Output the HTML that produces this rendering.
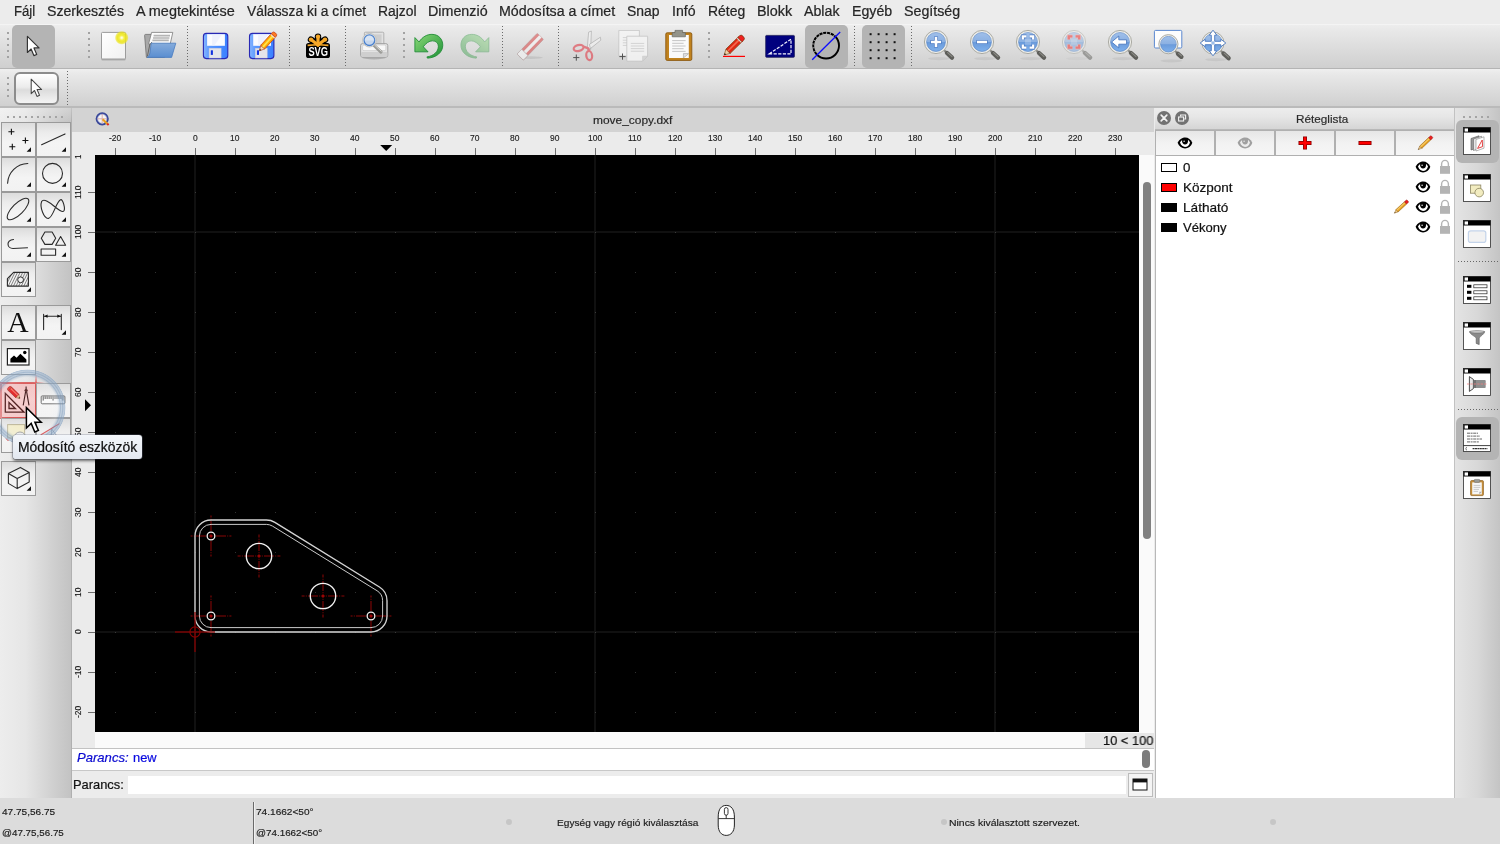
<!DOCTYPE html>
<html><head><meta charset="utf-8"><title>move_copy.dxf</title>
<style>
html,body{margin:0;padding:0;}
body{width:1500px;height:844px;overflow:hidden;background:#ececec;position:relative;font-family:"Liberation Sans",sans-serif;}
div,span,svg{box-sizing:content-box;}
</style></head><body><div id="root" style="position:absolute;left:0;top:0;width:1500px;height:844px;will-change:transform;">
<!-- top -->
<div style="position:absolute;left:0px;top:0px;width:1500px;height:24px;background:#ececec;"></div>
<span id="t1" style="position:absolute;left:13.70px;top:2.05px;font:14px/18px 'Liberation Sans', sans-serif;color:#262626;display:inline-block;transform-origin:0 0;transform:scaleX(0.9396);white-space:pre;-webkit-text-stroke:0.22px #262626;">Fájl</span>
<span id="t2" style="position:absolute;left:46.70px;top:2.05px;font:14px/18px 'Liberation Sans', sans-serif;color:#262626;display:inline-block;transform-origin:0 0;transform:scaleX(1.0098);white-space:pre;-webkit-text-stroke:0.22px #262626;">Szerkesztés</span>
<span id="t3" style="position:absolute;left:135.90px;top:2.05px;font:14px/18px 'Liberation Sans', sans-serif;color:#262626;display:inline-block;transform-origin:0 0;transform:scaleX(1.0310);white-space:pre;-webkit-text-stroke:0.22px #262626;">A megtekintése</span>
<span id="t4" style="position:absolute;left:246.90px;top:2.05px;font:14px/18px 'Liberation Sans', sans-serif;color:#262626;display:inline-block;transform-origin:0 0;transform:scaleX(0.9883);white-space:pre;-webkit-text-stroke:0.22px #262626;">Válassza ki a címet</span>
<span id="t5" style="position:absolute;left:377.50px;top:2.05px;font:14px/18px 'Liberation Sans', sans-serif;color:#262626;display:inline-block;transform-origin:0 0;transform:scaleX(0.9921);white-space:pre;-webkit-text-stroke:0.22px #262626;">Rajzol</span>
<span id="t6" style="position:absolute;left:427.50px;top:2.05px;font:14px/18px 'Liberation Sans', sans-serif;color:#262626;display:inline-block;transform-origin:0 0;transform:scaleX(1.0213);white-space:pre;-webkit-text-stroke:0.22px #262626;">Dimenzió</span>
<span id="t7" style="position:absolute;left:498.50px;top:2.05px;font:14px/18px 'Liberation Sans', sans-serif;color:#262626;display:inline-block;transform-origin:0 0;transform:scaleX(1.0158);white-space:pre;-webkit-text-stroke:0.22px #262626;">Módosítsa a címet</span>
<span id="t8" style="position:absolute;left:626.90px;top:2.05px;font:14px/18px 'Liberation Sans', sans-serif;color:#262626;display:inline-block;transform-origin:0 0;transform:scaleX(0.9938);white-space:pre;-webkit-text-stroke:0.22px #262626;">Snap</span>
<span id="t9" style="position:absolute;left:671.90px;top:2.05px;font:14px/18px 'Liberation Sans', sans-serif;color:#262626;display:inline-block;transform-origin:0 0;transform:scaleX(1.0060);white-space:pre;-webkit-text-stroke:0.22px #262626;">Infó</span>
<span id="t10" style="position:absolute;left:707.50px;top:2.05px;font:14px/18px 'Liberation Sans', sans-serif;color:#262626;display:inline-block;transform-origin:0 0;transform:scaleX(0.9957);white-space:pre;-webkit-text-stroke:0.22px #262626;">Réteg</span>
<span id="t11" style="position:absolute;left:756.90px;top:2.05px;font:14px/18px 'Liberation Sans', sans-serif;color:#262626;display:inline-block;transform-origin:0 0;transform:scaleX(1.0282);white-space:pre;-webkit-text-stroke:0.22px #262626;">Blokk</span>
<span id="t12" style="position:absolute;left:804.20px;top:2.05px;font:14px/18px 'Liberation Sans', sans-serif;color:#262626;display:inline-block;transform-origin:0 0;transform:scaleX(1.0134);white-space:pre;-webkit-text-stroke:0.22px #262626;">Ablak</span>
<span id="t13" style="position:absolute;left:851.90px;top:2.05px;font:14px/18px 'Liberation Sans', sans-serif;color:#262626;display:inline-block;transform-origin:0 0;transform:scaleX(1.0125);white-space:pre;-webkit-text-stroke:0.22px #262626;">Egyéb</span>
<span id="t14" style="position:absolute;left:903.50px;top:2.05px;font:14px/18px 'Liberation Sans', sans-serif;color:#262626;display:inline-block;transform-origin:0 0;transform:scaleX(1.0169);white-space:pre;-webkit-text-stroke:0.22px #262626;">Segítség</span>
<div style="position:absolute;left:0px;top:24px;width:1500px;height:44px;background:linear-gradient(#eeeeee,#e8e8e8 15%,#cfcfcf);"></div>
<div style="position:absolute;left:0px;top:24px;width:1500px;height:1px;background:#f4f4f4;"></div>
<div style="position:absolute;left:0px;top:68px;width:1500px;height:1px;background:#b4b4b4;"></div>
<div style="position:absolute;left:0px;top:69px;width:1500px;height:38px;background:linear-gradient(#efefef,#e8e8e8 15%,#cfcfcf);"></div>
<div style="position:absolute;left:0px;top:106px;width:1500px;height:2px;background:#bababa;"></div>
<div style="position:absolute;left:7px;top:32px;width:2px;height:2px;background:#a2a2a2;"></div><div style="position:absolute;left:7px;top:38px;width:2px;height:2px;background:#a2a2a2;"></div><div style="position:absolute;left:7px;top:44px;width:2px;height:2px;background:#a2a2a2;"></div><div style="position:absolute;left:7px;top:50px;width:2px;height:2px;background:#a2a2a2;"></div><div style="position:absolute;left:7px;top:56px;width:2px;height:2px;background:#a2a2a2;"></div>
<div style="position:absolute;left:88px;top:32px;width:2px;height:2px;background:#a2a2a2;"></div><div style="position:absolute;left:88px;top:38px;width:2px;height:2px;background:#a2a2a2;"></div><div style="position:absolute;left:88px;top:44px;width:2px;height:2px;background:#a2a2a2;"></div><div style="position:absolute;left:88px;top:50px;width:2px;height:2px;background:#a2a2a2;"></div><div style="position:absolute;left:88px;top:56px;width:2px;height:2px;background:#a2a2a2;"></div>
<div style="position:absolute;left:403px;top:32px;width:2px;height:2px;background:#a2a2a2;"></div><div style="position:absolute;left:403px;top:38px;width:2px;height:2px;background:#a2a2a2;"></div><div style="position:absolute;left:403px;top:44px;width:2px;height:2px;background:#a2a2a2;"></div><div style="position:absolute;left:403px;top:50px;width:2px;height:2px;background:#a2a2a2;"></div><div style="position:absolute;left:403px;top:56px;width:2px;height:2px;background:#a2a2a2;"></div>
<div style="position:absolute;left:708px;top:32px;width:2px;height:2px;background:#a2a2a2;"></div><div style="position:absolute;left:708px;top:38px;width:2px;height:2px;background:#a2a2a2;"></div><div style="position:absolute;left:708px;top:44px;width:2px;height:2px;background:#a2a2a2;"></div><div style="position:absolute;left:708px;top:50px;width:2px;height:2px;background:#a2a2a2;"></div><div style="position:absolute;left:708px;top:56px;width:2px;height:2px;background:#a2a2a2;"></div>
<div style="position:absolute;left:7px;top:77px;width:2px;height:2px;background:#a2a2a2;"></div><div style="position:absolute;left:7px;top:83px;width:2px;height:2px;background:#a2a2a2;"></div><div style="position:absolute;left:7px;top:89px;width:2px;height:2px;background:#a2a2a2;"></div><div style="position:absolute;left:7px;top:95px;width:2px;height:2px;background:#a2a2a2;"></div>
<div style="position:absolute;left:187px;top:26px;width:1px;height:41px;background:repeating-linear-gradient(to bottom,#6a6a6a 0 1px,transparent 1px 3px);"></div>
<div style="position:absolute;left:289px;top:26px;width:1px;height:41px;background:repeating-linear-gradient(to bottom,#6a6a6a 0 1px,transparent 1px 3px);"></div>
<div style="position:absolute;left:345px;top:26px;width:1px;height:41px;background:repeating-linear-gradient(to bottom,#6a6a6a 0 1px,transparent 1px 3px);"></div>
<div style="position:absolute;left:502px;top:26px;width:1px;height:41px;background:repeating-linear-gradient(to bottom,#6a6a6a 0 1px,transparent 1px 3px);"></div>
<div style="position:absolute;left:558px;top:26px;width:1px;height:41px;background:repeating-linear-gradient(to bottom,#6a6a6a 0 1px,transparent 1px 3px);"></div>
<div style="position:absolute;left:854px;top:26px;width:1px;height:41px;background:repeating-linear-gradient(to bottom,#6a6a6a 0 1px,transparent 1px 3px);"></div>
<div style="position:absolute;left:911px;top:26px;width:1px;height:41px;background:repeating-linear-gradient(to bottom,#6a6a6a 0 1px,transparent 1px 3px);"></div>
<div style="position:absolute;left:67px;top:71px;width:1px;height:35px;background:repeating-linear-gradient(to bottom,#6a6a6a 0 1px,transparent 1px 3px);"></div>
<div style="position:absolute;left:12px;top:25px;width:43px;height:43px;background:#b4b4b4;border-radius:5px;"></div>
<div style="position:absolute;left:805px;top:25px;width:43px;height:43px;background:#b4b4b4;border-radius:5px;"></div>
<div style="position:absolute;left:862px;top:25px;width:43px;height:43px;background:#b4b4b4;border-radius:5px;"></div>
<div style="position:absolute;left:14px;top:72px;width:45px;height:33px;box-sizing:border-box;border:2px solid #8c8c8c;border-radius:6px;background:linear-gradient(#ffffff,#ececec 45%,#dcdcdc 55%,#f4f4f4);"></div>
<!-- icons_top -->
<svg style="position:absolute;left:0px;top:0px;" width="1500" height="108" viewBox="0 0 1500 108"><defs><linearGradient id="lensg" x1="0" y1="0" x2="0" y2="1"><stop offset="0" stop-color="#86aee4"/><stop offset="0.5" stop-color="#6a9ada"/><stop offset="1" stop-color="#7eb0ec"/></linearGradient><linearGradient id="savg" x1="0" y1="0" x2="1" y2="0"><stop offset="0" stop-color="#86b6ff"/><stop offset="0.25" stop-color="#5a98ff"/><stop offset="1" stop-color="#3a80ff"/></linearGradient><linearGradient id="undog" x1="0" y1="0" x2="1" y2="1"><stop offset="0" stop-color="#8ad878"/><stop offset="1" stop-color="#1e9236"/></linearGradient><linearGradient id="papg" x1="0" y1="0" x2="1" y2="1"><stop offset="0" stop-color="#ffffff"/><stop offset="1" stop-color="#f0f0f0"/></linearGradient><linearGradient id="foldg" x1="0" y1="0" x2="0" y2="1"><stop offset="0" stop-color="#86acdc"/><stop offset="1" stop-color="#5a8ed0"/></linearGradient><radialGradient id="glow"><stop offset="0" stop-color="#ffffff"/><stop offset="0.12" stop-color="#fdfbc0"/><stop offset="0.35" stop-color="#f4ee30"/><stop offset="0.62" stop-color="#ece418"/><stop offset="0.82" stop-color="rgba(236,228,24,0.75)"/><stop offset="1" stop-color="rgba(236,228,24,0)"/></radialGradient></defs><path d="M0 0 V15.2 L3.5 11.9 L6.1 18.1 L8.8 17 L6.2 10.9 H11 Z" transform="translate(27.4 36.4) scale(1.06)" fill="#fff" stroke="#333" stroke-width="1.1" stroke-linejoin="round"/><path d="M0 0 V15.2 L3.5 11.9 L6.1 18.1 L8.8 17 L6.2 10.9 H11 Z" transform="translate(31.2 79.2) scale(0.95)" fill="#fff" stroke="#444" stroke-width="1.1" stroke-linejoin="round"/><rect x="101.4" y="32.8" width="24.2" height="27.6" rx="1.2" fill="#8e8e8e" opacity="0.55"/><rect x="101.5" y="32.4" width="24" height="26.6" rx="1" fill="url(#papg)" stroke="#9c9c9c" stroke-width="1"/><circle cx="121.7" cy="37.8" r="7" fill="url(#glow)" opacity="0.9"/><path d="M144.6 35.4 Q144.6 34.4 145.6 34.4 H151.5 L152.6 36 H165 V56.6 Q165 57.4 164 57.4 H146.4 Z" fill="#a8a8a8" stroke="#6e6e6e" stroke-width="0.8"/><path d="M151.6 32.4 H172.8 L170.2 44 H148.6 Z" fill="#fcfcfc" stroke="#7c7c7c" stroke-width="0.8"/><path d="M153.6 35.6 H170 M153 38 H169.4 M152.4 40.4 H168.8" stroke="#b4b4b4" stroke-width="1.6"/><path d="M147.4 56.2 L149.8 44.6 L152 42 " fill="none" stroke="#555" stroke-width="0.8"/><path d="M151.2 43.2 H175.8 L171.6 57.4 H147 Q149.6 56 150 53 Z" fill="url(#foldg)" stroke="#4a7cc0" stroke-width="0.8" stroke-linejoin="round"/><rect x="203.4" y="33.4" width="24.4" height="25.2" rx="3" fill="url(#savg)" stroke="#2828b4" stroke-width="1.1"/><rect x="207.1" y="34.2" width="17.8" height="11.6" fill="#fafbff"/><path d="M212.1 34.2 h10 l-8 11.6 h-2 Z" fill="#e8ecfc" opacity="0.7"/><rect x="209.1" y="48.2" width="12" height="9.8" fill="#e4e4ea" stroke="#c8c8d4" stroke-width="0.5"/><rect x="210.8" y="50.3" width="2.1" height="4.6" fill="#1030e0"/><rect x="249.5" y="33.4" width="24.4" height="25.2" rx="3" fill="url(#savg)" stroke="#2828b4" stroke-width="1.1"/><rect x="253.2" y="34.2" width="17.8" height="11.6" fill="#fafbff"/><path d="M258.2 34.2 h10 l-8 11.6 h-2 Z" fill="#e8ecfc" opacity="0.7"/><rect x="255.2" y="48.2" width="12" height="9.8" fill="#e4e4ea" stroke="#c8c8d4" stroke-width="0.5"/><rect x="256.9" y="50.3" width="2.1" height="4.6" fill="#1030e0"/><g transform="translate(259.4 50.8) rotate(-47.8)"><path d="M0 0 L5 -2.7 V2.7 Z" fill="#f6dcb4" stroke="#b03818" stroke-width="0.6"/><path d="M0 0 L1.8 -1 V1 Z" fill="#3a2a18"/><rect x="5" y="-2.7" width="15.4" height="5.4" fill="#ffa800" stroke="#c04018" stroke-width="0.7"/><rect x="5" y="-0.9" width="15.4" height="1.8" fill="#ffe24a"/><rect x="19.2" y="-2.7" width="1.4" height="5.4" fill="#f4e8d8"/><path d="M20.6 -2.7 H22.4 Q24 -2.7 24 0 Q24 2.7 22.4 2.7 H20.6 Z" fill="#ff7a20" stroke="#c04018" stroke-width="0.7"/></g><rect x="306" y="43" width="24" height="15" rx="2.6" fill="#000"/><path d="M308 45.4 H328" stroke="#000" stroke-width="4"/><path d="M318 45 L311 39.6" stroke="#000" stroke-width="6.4" stroke-linecap="round"/><path d="M318 45 L318 36.6" stroke="#000" stroke-width="6.4" stroke-linecap="round"/><path d="M318 45 L325 39.6" stroke="#000" stroke-width="6.4" stroke-linecap="round"/><path d="M318 45 L311 39.6" stroke="#f6a828" stroke-width="3.2" stroke-linecap="round"/><path d="M318 45 L318 36.6" stroke="#f6a828" stroke-width="3.2" stroke-linecap="round"/><path d="M318 45 L325 39.6" stroke="#f6a828" stroke-width="3.2" stroke-linecap="round"/><circle cx="311" cy="39.6" r="2.2" fill="#f6a828"/><circle cx="318" cy="36.6" r="2.2" fill="#f6a828"/><circle cx="325" cy="39.6" r="2.2" fill="#f6a828"/><path d="M307.6 45.4 Q318 44 328.4 45.4" stroke="#f6a828" stroke-width="1.6" fill="none"/><text x="318.2" y="56.4" font-family="Liberation Sans" font-weight="bold" font-size="12.4" text-anchor="middle" fill="#fff" textLength="19.6" lengthAdjust="spacingAndGlyphs">SVG</text><ellipse cx="374" cy="57.6" rx="12" ry="1.8" fill="rgba(0,0,0,0.18)"/><rect x="364.4" y="32.2" width="19.4" height="14" rx="1" fill="#e2e2e2" stroke="#a4a4a4" stroke-width="0.8"/><rect x="372" y="34.4" width="9.6" height="9" fill="#cecece"/><path d="M362.6 43.6 H385.8 Q387.8 43.6 387.8 45.6 V55.2 Q387.8 57.2 385.8 57.2 H362.6 Q360.6 57.2 360.6 55.2 V45.6 Q360.6 43.6 362.6 43.6 Z" fill="#e4e4e4" stroke="#9c9c9c" stroke-width="0.9"/><rect x="362.6" y="45" width="23.2" height="5.6" rx="1.4" fill="#f8f8f8" stroke="#c4c4c4" stroke-width="0.6"/><rect x="361" y="52" width="26.4" height="4.8" rx="1.4" fill="#cfcfcf"/><path d="M374 45.4 L381 52" stroke="#9c9c98" stroke-width="3.2" stroke-linecap="round"/><path d="M374.6 45 L381.2 51.2" stroke="#d8d8d4" stroke-width="1" stroke-linecap="round"/><circle cx="369.4" cy="40.2" r="6.8" fill="#f0f0ee" stroke="#b8b8b4" stroke-width="0.8"/><circle cx="369.4" cy="40.2" r="5.3" fill="#c4d6ee" stroke="#4a80cc" stroke-width="1.3"/><path d="M364.4 40.4 A5 5 0 0 1 374.4 40.4 Z" fill="rgba(255,255,255,0.35)"/><path d="M9.2 11 L13.6 15.6 C17 10.2 22 7.6 27 7.6 C34 7.6 38.4 12.6 38.4 19 C38.4 26.2 32 32 22.4 32.5 L21.8 31.2 C29 30.2 33.8 25.6 33.8 20 C33.8 16.6 31.2 14.4 27.6 14.4 C24 14.4 20.6 17 18 20.6 L23 25.9 H9.2 Z" transform="translate(406.1 27.1) scale(0.955)" fill="url(#undog)" stroke="#1e8a34" stroke-width="0.9" stroke-linejoin="round"/><g opacity="0.42"><path d="M9.2 11 L13.6 15.6 C17 10.2 22 7.6 27 7.6 C34 7.6 38.4 12.6 38.4 19 C38.4 26.2 32 32 22.4 32.5 L21.8 31.2 C29 30.2 33.8 25.6 33.8 20 C33.8 16.6 31.2 14.4 27.6 14.4 C24 14.4 20.6 17 18 20.6 L23 25.9 H9.2 Z" transform="translate(497.6 27.1) scale(-0.955 0.955)" fill="url(#undog)" stroke="#1e8a34" stroke-width="0.9" stroke-linejoin="round"/></g><g opacity="0.52"><ellipse cx="531" cy="57.6" rx="12" ry="1.3" fill="rgba(0,0,0,0.16)"/><g transform="translate(523.4 53.8) rotate(-45.8)"><rect x="-4.6" y="-4.4" width="29" height="8.8" rx="1" fill="#d83c3c" stroke="#a05050" stroke-width="0.6"/><rect x="2" y="-1.6" width="22.4" height="3.2" fill="#fafafa"/><rect x="-4.6" y="-4.4" width="6.6" height="8.8" rx="0.8" fill="#fcfcfc" stroke="#909090" stroke-width="0.6"/></g></g><g opacity="0.6"><path d="M587.2 49.4 L588.6 32.2 L591.4 31 L590.6 49.6 Z" fill="#f4f4f4" stroke="#8a8a8a" stroke-width="0.7"/><path d="M589.4 44.4 L600.4 37.2 L600.8 40.2 L590.4 48.6 Z" fill="#f4f4f4" stroke="#8a8a8a" stroke-width="0.7"/><ellipse cx="578.6" cy="48" rx="5" ry="2.9" transform="rotate(-14 578.6 48)" fill="none" stroke="#e03c48" stroke-width="2.2"/><ellipse cx="589.2" cy="55.6" rx="2.9" ry="4.6" transform="rotate(-8 589.2 55.6)" fill="none" stroke="#e03c48" stroke-width="2.2"/><path d="M583.4 46.6 L588.6 48.4 M588.4 48.2 L588.8 51.2" stroke="#e03c48" stroke-width="2.4"/></g><path d="M573.2 57.6 H579.4 M576.3 54.5 V60.7" stroke="#3a3a3a" stroke-width="1" opacity="0.85"/><g opacity="0.8"><path d="M618.8 30.4 H639.4 V51 L634.4 56 H618.8 Z" fill="#f6f6f6" stroke="#bdbdbd" stroke-width="0.8" stroke-linejoin="round"/><path d="M634.4 56 V51 H639.4 Z" fill="#d4d4d4" stroke="#bdbdbd" stroke-width="0.5"/><path d="M622.8 37.6 H636" stroke="#d0d0d0" stroke-width="1"/><path d="M622.8 40.2 H636" stroke="#d0d0d0" stroke-width="1"/><path d="M622.8 42.8 H636" stroke="#d0d0d0" stroke-width="1"/><path d="M622.8 45.4 H636" stroke="#d0d0d0" stroke-width="1"/><path d="M626.8 36.2 H647.6 V56.2 L642.6 61.2 H626.8 Z" fill="#f6f6f6" stroke="#bdbdbd" stroke-width="0.8" stroke-linejoin="round"/><path d="M642.6 61.2 V56.2 H647.6 Z" fill="#d4d4d4" stroke="#bdbdbd" stroke-width="0.5"/><path d="M630.8 43.4 H644.2" stroke="#d0d0d0" stroke-width="1"/><path d="M630.8 46 H644.2" stroke="#d0d0d0" stroke-width="1"/><path d="M630.8 48.6 H644.2" stroke="#d0d0d0" stroke-width="1"/><path d="M630.8 51.2 H644.2" stroke="#d0d0d0" stroke-width="1"/></g><path d="M619.4 56.6 H625.6 M622.5 53.5 V59.7" stroke="#3a3a3a" stroke-width="1" opacity="0.85"/><rect x="665.8" y="32.8" width="26" height="27.6" rx="1.4" fill="#c0821e" stroke="#8a5810" stroke-width="0.9"/><path d="M669 35 H688.8 V58 H669 Z" fill="#fafafa"/><path d="M672.2 40.6 H685.6" stroke="#c0c0c0" stroke-width="0.9"/><path d="M672.2 43.3 H683.6" stroke="#c0c0c0" stroke-width="0.9"/><path d="M672.2 46 H685.6" stroke="#c0c0c0" stroke-width="0.9"/><path d="M672.2 48.7 H683.6" stroke="#c0c0c0" stroke-width="0.9"/><path d="M672.2 51.4 H685.6" stroke="#c0c0c0" stroke-width="0.9"/><path d="M683.4 58 V53.6 H688.8 Z" fill="#b8b8b8"/><path d="M683.4 53.6 H688.8 L683.4 58 Z" fill="#e0e0e0" stroke="#9a9a9a" stroke-width="0.4"/><path d="M675 30.4 H682.6 V32.6 H685.4 V36.8 H672.2 V32.6 H675 Z" fill="#94948a" stroke="#66665e" stroke-width="0.7" stroke-linejoin="round"/><path d="M723 56.4 H745" stroke="#ff0000" stroke-width="1.2"/><g transform="translate(724.2 55) rotate(-44.4)"><path d="M0 0 L5.4 -3 V3 Z" fill="#f0d2a8" stroke="#7a4a18" stroke-width="0.6"/><path d="M0 0 L1.8 -1 V1 Z" fill="#201008"/><rect x="5.4" y="-3" width="17.6" height="6" fill="#e02814" stroke="#7a3a10" stroke-width="0.7"/><rect x="5.4" y="-1.1" width="17.6" height="1.6" fill="#f46a50"/><rect x="20.4" y="-3" width="1.6" height="6" fill="#d8d0c8"/><path d="M22 -3 H24.6 Q26.6 -3 26.6 0 Q26.6 3 24.6 3 H22 Z" fill="#f02020" stroke="#7a3a10" stroke-width="0.7"/></g><rect x="765.7" y="35.4" width="28.7" height="21.9" rx="0.8" fill="#00007e" stroke="#20205a" stroke-width="0.8"/><path d="M769.2 53.9 L791 39.2 V53.9 Z" fill="none" stroke="#f4f4ff" stroke-width="1.2" stroke-dasharray="3.2 1.4"/><circle cx="826.1" cy="45.6" r="12.9" fill="none" stroke="#000" stroke-width="1.9"/><path d="M816.2 54.4 A13 13 0 0 1 835.6 36.4" fill="none" stroke="#b4b4b4" stroke-width="3.4" stroke-dasharray="0.9 3.1" stroke-dashoffset="1.2"/><path d="M812.2 59.8 L840.2 32" stroke="#0c0cff" stroke-width="1.3"/><rect x="869.6" y="33.2" width="2" height="2" fill="#111"/><rect x="869.6" y="41.2" width="2" height="2" fill="#111"/><rect x="869.6" y="49.2" width="2" height="2" fill="#111"/><rect x="869.6" y="57.2" width="2" height="2" fill="#111"/><rect x="877.6" y="33.2" width="2" height="2" fill="#111"/><rect x="877.6" y="41.2" width="2" height="2" fill="#111"/><rect x="877.6" y="49.2" width="2" height="2" fill="#111"/><rect x="877.6" y="57.2" width="2" height="2" fill="#111"/><rect x="885.6" y="33.2" width="2" height="2" fill="#111"/><rect x="885.6" y="41.2" width="2" height="2" fill="#111"/><rect x="885.6" y="49.2" width="2" height="2" fill="#111"/><rect x="885.6" y="57.2" width="2" height="2" fill="#111"/><rect x="893.6" y="33.2" width="2" height="2" fill="#111"/><rect x="893.6" y="41.2" width="2" height="2" fill="#111"/><rect x="893.6" y="49.2" width="2" height="2" fill="#111"/><rect x="893.6" y="57.2" width="2" height="2" fill="#111"/><g opacity="1"><ellipse cx="939" cy="58.6" rx="11" ry="1.6" fill="rgba(0,0,0,0.06)"/><path d="M943.201 49.2012 L947.201 53.2012" stroke="#8c8c86" stroke-width="2.2"/><path d="M947.001 53.0012 L952.001 57.6012" stroke="#5e5e5a" stroke-width="4.4" stroke-linecap="round"/><path d="M947.601 52.6012 L952.001 56.6012" stroke="#8a8a84" stroke-width="1.2" stroke-linecap="round"/><circle cx="936" cy="42" r="11.6" fill="#ecece8" stroke="#a4a49c" stroke-width="0.9"/><circle cx="936" cy="42" r="9.4" fill="url(#lensg)" stroke="#5a88c8" stroke-width="0.7"/><path d="M926.6 42 A9.4 9.4 0 0 1 945.4 42 Z" fill="rgba(255,255,255,0.22)"/><path d="M930.4 42 H941.6 M936 36.4 V47.6" stroke="#4a78c0" stroke-width="4"/><path d="M931 42 H941 M936 37 V47" stroke="#fff" stroke-width="2.6"/></g><g opacity="1"><ellipse cx="985" cy="58.6" rx="11" ry="1.6" fill="rgba(0,0,0,0.06)"/><path d="M989.201 49.2012 L993.201 53.2012" stroke="#8c8c86" stroke-width="2.2"/><path d="M993.001 53.0012 L998.001 57.6012" stroke="#5e5e5a" stroke-width="4.4" stroke-linecap="round"/><path d="M993.601 52.6012 L998.001 56.6012" stroke="#8a8a84" stroke-width="1.2" stroke-linecap="round"/><circle cx="982" cy="42" r="11.6" fill="#ecece8" stroke="#a4a49c" stroke-width="0.9"/><circle cx="982" cy="42" r="9.4" fill="url(#lensg)" stroke="#5a88c8" stroke-width="0.7"/><path d="M972.6 42 A9.4 9.4 0 0 1 991.4 42 Z" fill="rgba(255,255,255,0.22)"/><path d="M976.4 42 H987.6" stroke="#4a78c0" stroke-width="4"/><path d="M977 42 H987" stroke="#fff" stroke-width="2.6"/></g><g opacity="1"><ellipse cx="1031" cy="58.6" rx="11" ry="1.6" fill="rgba(0,0,0,0.06)"/><path d="M1035.2 49.2012 L1039.2 53.2012" stroke="#8c8c86" stroke-width="2.2"/><path d="M1039 53.0012 L1044 57.6012" stroke="#5e5e5a" stroke-width="4.4" stroke-linecap="round"/><path d="M1039.6 52.6012 L1044 56.6012" stroke="#8a8a84" stroke-width="1.2" stroke-linecap="round"/><circle cx="1028" cy="42" r="11.6" fill="#ecece8" stroke="#a4a49c" stroke-width="0.9"/><circle cx="1028" cy="42" r="9.4" fill="url(#lensg)" stroke="#5a88c8" stroke-width="0.7"/><path d="M1018.6 42 A9.4 9.4 0 0 1 1037.4 42 Z" fill="rgba(255,255,255,0.22)"/><path d="M1022.8 39.6 v-3.2 h3.6 M1029.6 36.4 h3.6 v3.2 M1033.2 44.4 v3.2 h-3.6 M1026.4 47.6 h-3.6 v-3.2" fill="none" stroke="#4a78c0" stroke-width="3.7"/><path d="M1022.8 39.6 v-3.2 h3.6 M1029.6 36.4 h3.6 v3.2 M1033.2 44.4 v3.2 h-3.6 M1026.4 47.6 h-3.6 v-3.2" fill="none" stroke="#fff" stroke-width="2.3"/><rect x="1025" y="39.3" width="6" height="5.4" fill="rgba(255,255,255,0.22)"/></g><g opacity="0.5"><ellipse cx="1077" cy="58.6" rx="11" ry="1.6" fill="rgba(0,0,0,0.06)"/><path d="M1081.2 49.2012 L1085.2 53.2012" stroke="#8c8c86" stroke-width="2.2"/><path d="M1085 53.0012 L1090 57.6012" stroke="#5e5e5a" stroke-width="4.4" stroke-linecap="round"/><path d="M1085.6 52.6012 L1090 56.6012" stroke="#8a8a84" stroke-width="1.2" stroke-linecap="round"/><circle cx="1074" cy="42" r="11.6" fill="#ecece8" stroke="#a4a49c" stroke-width="0.9"/><circle cx="1074" cy="42" r="9.4" fill="url(#lensg)" stroke="#5a88c8" stroke-width="0.7"/><path d="M1064.6 42 A9.4 9.4 0 0 1 1083.4 42 Z" fill="rgba(255,255,255,0.22)"/><path d="M1068.8 39.6 v-3.2 h3.6 M1075.6 36.4 h3.6 v3.2 M1079.2 44.4 v3.2 h-3.6 M1072.4 47.6 h-3.6 v-3.2" fill="none" stroke="#e8a0a0" stroke-width="3.7"/><path d="M1068.8 39.6 v-3.2 h3.6 M1075.6 36.4 h3.6 v3.2 M1079.2 44.4 v3.2 h-3.6 M1072.4 47.6 h-3.6 v-3.2" fill="none" stroke="#f02020" stroke-width="2.3"/><rect x="1071" y="39.3" width="6" height="5.4" fill="rgba(255,255,255,0.22)"/></g><g opacity="1"><ellipse cx="1123" cy="58.6" rx="11" ry="1.6" fill="rgba(0,0,0,0.06)"/><path d="M1127.2 49.2012 L1131.2 53.2012" stroke="#8c8c86" stroke-width="2.2"/><path d="M1131 53.0012 L1136 57.6012" stroke="#5e5e5a" stroke-width="4.4" stroke-linecap="round"/><path d="M1131.6 52.6012 L1136 56.6012" stroke="#8a8a84" stroke-width="1.2" stroke-linecap="round"/><circle cx="1120" cy="42" r="11.6" fill="#ecece8" stroke="#a4a49c" stroke-width="0.9"/><circle cx="1120" cy="42" r="9.4" fill="url(#lensg)" stroke="#5a88c8" stroke-width="0.7"/><path d="M1110.6 42 A9.4 9.4 0 0 1 1129.4 42 Z" fill="rgba(255,255,255,0.22)"/><path d="M1111.6 42 L1118.8 36 V39.8 H1126.6 V44.2 H1118.8 V48 Z" fill="#fff" stroke="#4a78c0" stroke-width="0.9" stroke-linejoin="round"/></g><rect x="1154.4" y="30.4" width="27.4" height="17.6" rx="1.2" fill="#fdfdfd" stroke="#5a88d0" stroke-width="1"/><g opacity="1"><ellipse cx="1171.4" cy="60.8" rx="11" ry="1.6" fill="rgba(0,0,0,0.06)"/><path d="M1174.19 49.9872 L1178.19 53.9872" stroke="#8c8c86" stroke-width="2.2"/><path d="M1177.99 53.7872 L1181.39 56.7872" stroke="#5e5e5a" stroke-width="4.4" stroke-linecap="round"/><path d="M1178.59 53.3872 L1181.39 55.7872" stroke="#8a8a84" stroke-width="1.2" stroke-linecap="round"/><circle cx="1168.4" cy="44.2" r="9.6" fill="#ecece8" stroke="#a4a49c" stroke-width="0.9"/><circle cx="1168.4" cy="44.2" r="7.8" fill="url(#lensg)" stroke="#5a88c8" stroke-width="0.7"/><path d="M1160.6 44.2 A7.8 7.8 0 0 1 1176.2 44.2 Z" fill="rgba(255,255,255,0.22)"/></g><g opacity="1"><ellipse cx="1216" cy="59.6" rx="11" ry="1.6" fill="rgba(0,0,0,0.06)"/><path d="M1219.78 49.777 L1223.78 53.777" stroke="#8c8c86" stroke-width="2.2"/><path d="M1223.58 53.577 L1228.58 58.177" stroke="#5e5e5a" stroke-width="4.4" stroke-linecap="round"/><path d="M1224.18 53.177 L1228.58 57.177" stroke="#8a8a84" stroke-width="1.2" stroke-linecap="round"/><circle cx="1213" cy="43" r="11" fill="#ecece8" stroke="#a4a49c" stroke-width="0.9"/><circle cx="1213" cy="43" r="9.2" fill="url(#lensg)" stroke="#5a88c8" stroke-width="0.7"/><path d="M1203.8 43 A9.2 9.2 0 0 1 1222.2 43 Z" fill="rgba(255,255,255,0.22)"/><path d="M1213 30.2 L1216.8 35.2 H1214.7 V41.3 H1220.8 V39.2 L1225.8 43 L1220.8 46.8 V44.7 H1214.7 V50.8 H1216.8 L1213 55.8 L1209.2 50.8 H1211.3 V44.7 H1205.2 V46.8 L1200.2 43 L1205.2 39.2 V41.3 H1211.3 V35.2 H1209.2 Z" fill="#fff" stroke="#4a78c0" stroke-width="0.9" stroke-linejoin="round"/><rect x="1211.4" y="41.4" width="3.2" height="3.2" fill="#9abce8"/></g></svg>
<!-- left -->
<div style="position:absolute;left:0px;top:108px;width:72px;height:690px;background:linear-gradient(to right,#ededed 0,#e6e6e6 35%,#cfcfcf 75%,#c2c2c2 100%);"></div>
<div style="position:absolute;left:71px;top:108px;width:1px;height:690px;background:#b0b0b0;"></div>
<div style="position:absolute;left:0px;top:108px;width:72px;height:14px;background:linear-gradient(rgba(255,255,255,0.25),rgba(255,255,255,0));"></div>
<div style="position:absolute;left:7px;top:116px;width:2px;height:2px;background:#a4a4a4;"></div><div style="position:absolute;left:13px;top:116px;width:2px;height:2px;background:#a4a4a4;"></div><div style="position:absolute;left:19px;top:116px;width:2px;height:2px;background:#a4a4a4;"></div><div style="position:absolute;left:25px;top:116px;width:2px;height:2px;background:#a4a4a4;"></div><div style="position:absolute;left:31px;top:116px;width:2px;height:2px;background:#a4a4a4;"></div><div style="position:absolute;left:37px;top:116px;width:2px;height:2px;background:#a4a4a4;"></div><div style="position:absolute;left:43px;top:116px;width:2px;height:2px;background:#a4a4a4;"></div><div style="position:absolute;left:49px;top:116px;width:2px;height:2px;background:#a4a4a4;"></div><div style="position:absolute;left:55px;top:116px;width:2px;height:2px;background:#a4a4a4;"></div><div style="position:absolute;left:61px;top:116px;width:2px;height:2px;background:#a4a4a4;"></div>
<div style="position:absolute;left:1px;top:122px;width:33px;height:33px;border:1px solid #9a9a9a;background:linear-gradient(#dcdcdc,#ececec 30%,#f4f4f4 60%,#f2f2f2);"></div><svg style="position:absolute;left:1px;top:122px;" width="35" height="35" viewBox="0 0 35 35"><path d="M7.4 9.7 H13.4 M10.4 6.7 V12.7" stroke="#111" stroke-width="1.1" fill="none"/><path d="M21.4 18.5 H27.4 M24.4 15.5 V21.5" stroke="#111" stroke-width="1.1" fill="none"/><path d="M8.3 24.7 H14.3 M11.3 21.7 V27.7" stroke="#111" stroke-width="1.1" fill="none"/><path d="M30 25.3 V29.7 H25.6 Z" fill="#111"/></svg>
<div style="position:absolute;left:36px;top:122px;width:33px;height:33px;border:1px solid #9a9a9a;background:linear-gradient(#dcdcdc,#ececec 30%,#f4f4f4 60%,#f2f2f2);"></div><svg style="position:absolute;left:36px;top:122px;" width="35" height="35" viewBox="0 0 35 35"><path d="M5.6 22.8 L29 11.9" fill="none" stroke="#2a2a2a" stroke-width="1.1" stroke-linecap="round" stroke-linejoin="round"/><path d="M30 25.3 V29.7 H25.6 Z" fill="#111"/></svg>
<div style="position:absolute;left:1px;top:157px;width:33px;height:33px;border:1px solid #9a9a9a;background:linear-gradient(#dcdcdc,#ececec 30%,#f4f4f4 60%,#f2f2f2);"></div><svg style="position:absolute;left:1px;top:157px;" width="35" height="35" viewBox="0 0 35 35"><path d="M6.6 26.2 A20.5 20.5 0 0 1 26.8 6.5" fill="none" stroke="#2a2a2a" stroke-width="1.1" stroke-linecap="round" stroke-linejoin="round"/><path d="M30 25.3 V29.7 H25.6 Z" fill="#111"/></svg>
<div style="position:absolute;left:36px;top:157px;width:33px;height:33px;border:1px solid #9a9a9a;background:linear-gradient(#dcdcdc,#ececec 30%,#f4f4f4 60%,#f2f2f2);"></div><svg style="position:absolute;left:36px;top:157px;" width="35" height="35" viewBox="0 0 35 35"><circle cx="16.5" cy="16.4" r="10" fill="none" stroke="#2a2a2a" stroke-width="1.1" stroke-linecap="round" stroke-linejoin="round"/><path d="M30 25.3 V29.7 H25.6 Z" fill="#111"/></svg>
<div style="position:absolute;left:1px;top:192px;width:33px;height:33px;border:1px solid #9a9a9a;background:linear-gradient(#dcdcdc,#ececec 30%,#f4f4f4 60%,#f2f2f2);"></div><svg style="position:absolute;left:1px;top:192px;" width="35" height="35" viewBox="0 0 35 35"><ellipse cx="17" cy="17" rx="14.2" ry="5.5" transform="rotate(-45 17 17)" fill="none" stroke="#2a2a2a" stroke-width="1.1" stroke-linecap="round" stroke-linejoin="round"/><path d="M30 25.3 V29.7 H25.6 Z" fill="#111"/></svg>
<div style="position:absolute;left:36px;top:192px;width:33px;height:33px;border:1px solid #9a9a9a;background:linear-gradient(#dcdcdc,#ececec 30%,#f4f4f4 60%,#f2f2f2);"></div><svg style="position:absolute;left:36px;top:192px;" width="35" height="35" viewBox="0 0 35 35"><path d="M5.6 9.6 C3.5 15 8 27 12.5 26.4 C17 25.8 20 10 24.5 7.8 C27 6.5 29.5 17 27.8 19 C26.5 20.6 22 17.5 18.5 14.5 C14 10.5 7.5 6 5.6 9.6 Z" fill="none" stroke="#2a2a2a" stroke-width="1.1" stroke-linecap="round" stroke-linejoin="round"/><path d="M30 25.3 V29.7 H25.6 Z" fill="#111"/></svg>
<div style="position:absolute;left:1px;top:227px;width:33px;height:33px;border:1px solid #9a9a9a;background:linear-gradient(#dcdcdc,#ececec 30%,#f4f4f4 60%,#f2f2f2);"></div><svg style="position:absolute;left:1px;top:227px;" width="35" height="35" viewBox="0 0 35 35"><path d="M12.5 12.5 C8.5 12.5 7 15.5 7 17 C7 19.5 9 21.5 12 21.5 L26.5 20.8" fill="none" stroke="#2a2a2a" stroke-width="1.1" stroke-linecap="round" stroke-linejoin="round"/><path d="M30 25.3 V29.7 H25.6 Z" fill="#111"/></svg>
<div style="position:absolute;left:36px;top:227px;width:33px;height:33px;border:1px solid #9a9a9a;background:linear-gradient(#dcdcdc,#ececec 30%,#f4f4f4 60%,#f2f2f2);"></div><svg style="position:absolute;left:36px;top:227px;" width="35" height="35" viewBox="0 0 35 35"><path d="M8.9 5 H16.1 L19.7 11.2 L16.1 17.4 H8.9 L5.3 11.2 Z" fill="none" stroke="#2a2a2a" stroke-width="1.1" stroke-linecap="round" stroke-linejoin="round"/><path d="M19.6 18.3 H29.6 L24.6 9.6 Z" fill="none" stroke="#2a2a2a" stroke-width="1.1" stroke-linecap="round" stroke-linejoin="round"/><rect x="5.1" y="22" width="14.5" height="6.3" fill="none" stroke="#2a2a2a" stroke-width="1.1" stroke-linecap="round" stroke-linejoin="round"/><path d="M30 25.3 V29.7 H25.6 Z" fill="#111"/></svg>
<div style="position:absolute;left:1px;top:262px;width:33px;height:33px;border:1px solid #9a9a9a;background:linear-gradient(#dcdcdc,#ececec 30%,#f4f4f4 60%,#f2f2f2);"></div><svg style="position:absolute;left:1px;top:262px;" width="35" height="35" viewBox="0 0 35 35"><defs><clipPath id="hc"><path d="M6.4 24.1 V16.6 L12.6 10.4 H27.4 V24.1 Z M19.6 14.9 a2.9 2.9 0 1 0 0.01 0 Z" clip-rule="evenodd"/></clipPath></defs><g clip-path="url(#hc)"><path d="M2.1 24 L8.7 10.4" stroke="#555" stroke-width="0.7"/><path d="M4.7 24 L11.3 10.4" stroke="#555" stroke-width="0.7"/><path d="M7.3 24 L13.9 10.4" stroke="#555" stroke-width="0.7"/><path d="M9.9 24 L16.5 10.4" stroke="#555" stroke-width="0.7"/><path d="M12.5 24 L19.1 10.4" stroke="#555" stroke-width="0.7"/><path d="M15.1 24 L21.7 10.4" stroke="#555" stroke-width="0.7"/><path d="M17.7 24 L24.3 10.4" stroke="#555" stroke-width="0.7"/><path d="M20.3 24 L26.9 10.4" stroke="#555" stroke-width="0.7"/><path d="M22.9 24 L29.5 10.4" stroke="#555" stroke-width="0.7"/><path d="M25.5 24 L32.1 10.4" stroke="#555" stroke-width="0.7"/><path d="M28.1 24 L34.7 10.4" stroke="#555" stroke-width="0.7"/></g><path d="M6.4 24.1 V16.6 L12.6 10.4 H27.4 V24.1 Z" fill="none" stroke="#2a2a2a" stroke-width="1.1" stroke-linecap="round" stroke-linejoin="round"/><circle cx="19.6" cy="17.8" r="2.9" fill="#f2f2f2" stroke="#2a2a2a" stroke-width="1"/><path d="M30 25.3 V29.7 H25.6 Z" fill="#111"/></svg>
<div style="position:absolute;left:1px;top:305px;width:33px;height:33px;border:1px solid #9a9a9a;background:linear-gradient(#dcdcdc,#ececec 30%,#f4f4f4 60%,#f2f2f2);"></div><svg style="position:absolute;left:1px;top:305px;" width="35" height="35" viewBox="0 0 35 35"><text x="17" y="26.6" font-family="Liberation Serif" font-size="29.6" text-anchor="middle" fill="#111">A</text></svg>
<div style="position:absolute;left:36px;top:305px;width:33px;height:33px;border:1px solid #9a9a9a;background:linear-gradient(#dcdcdc,#ececec 30%,#f4f4f4 60%,#f2f2f2);"></div><svg style="position:absolute;left:36px;top:305px;" width="35" height="35" viewBox="0 0 35 35"><path d="M7.6 9.2 V24.6 M25.3 9.2 V24.6 M7.6 11.2 H25.3" fill="none" stroke="#2a2a2a" stroke-width="1.1" stroke-linecap="round" stroke-linejoin="round"/><path d="M8 11.2 L11.6 9.6 V12.8 Z M24.9 11.2 L21.3 9.6 V12.8 Z" fill="#111"/><path d="M30 25.3 V29.7 H25.6 Z" fill="#111"/></svg>
<div style="position:absolute;left:1px;top:340px;width:33px;height:33px;border:1px solid #9a9a9a;background:linear-gradient(#dcdcdc,#ececec 30%,#f4f4f4 60%,#f2f2f2);"></div><svg style="position:absolute;left:1px;top:340px;" width="35" height="35" viewBox="0 0 35 35"><rect x="6.4" y="8.6" width="21.6" height="16.4" fill="#fff" stroke="#222" stroke-width="1.2"/><path d="M9.4 22.4 V18.8 L13 15.4 L15.6 17.8 L19.4 13.8 L25.4 19.4 V22.4 Z" fill="#000"/><circle cx="23.8" cy="12.5" r="1.7" fill="#000"/></svg>
<div style="position:absolute;left:1px;top:383px;width:33px;height:33px;border:1px solid #d45858;background:linear-gradient(#f2c0c0,#f6cccc 50%,#f4c8c8);"></div><svg style="position:absolute;left:1px;top:383px;" width="35" height="35" viewBox="0 0 35 35"><path d="M4.3 10.4 V29.2 H23 Z M8 19.6 V25.5 H14.4 Z" fill="none" stroke="#4a1616" stroke-width="1.3" stroke-linejoin="miter"/><g transform="translate(18.9 15.4) rotate(-136.2)"><path d="M0 0 L3.6 -2.4 V2.4 Z" fill="#e8b890" stroke="#7a4a18" stroke-width="0.4"/><path d="M0 0 L1.3 -0.9 V0.9 Z" fill="#301808"/><rect x="3.6" y="-2.4" width="10.2" height="4.8" fill="#e01c1c" stroke="#8a1a10" stroke-width="0.5"/><rect x="3.6" y="0.2" width="10.2" height="1.2" fill="#f47060"/><path d="M13.8 -2.4 H14.6 Q16 -2.4 16 0 Q16 2.4 14.6 2.4 H13.8 Z" fill="#f02020" stroke="#8a1a10" stroke-width="0.5"/></g><path d="M25.1 3.6 V6.4 M24.6 8.6 L22.2 22.4 M25.6 8.6 L28 22.4" stroke="#3a1414" stroke-width="1.1" fill="none"/><circle cx="25.1" cy="7.5" r="1.3" fill="#5a2020" stroke="#3a1414" stroke-width="0.6"/></svg>
<div style="position:absolute;left:0px;top:382.4px;width:45px;height:1.6px;background:linear-gradient(to right,rgba(214,76,76,0.95) 75%,rgba(214,76,76,0));"></div>
<div style="position:absolute;left:0px;top:417px;width:44px;height:1.6px;background:linear-gradient(to right,rgba(214,76,76,0.95) 78%,rgba(214,76,76,0));"></div>
<div style="position:absolute;left:35px;top:374px;width:1.6px;height:47px;background:linear-gradient(rgba(214,76,76,0),rgba(214,76,76,0.95) 20%,rgba(214,76,76,0.95) 88%,rgba(214,76,76,0));"></div>
<div style="position:absolute;left:0px;top:383px;width:2px;height:35px;background:#e07878;"></div>
<div style="position:absolute;left:36px;top:383px;width:33px;height:33px;border:1px solid #9a9a9a;background:linear-gradient(#dcdcdc,#ececec 30%,#f4f4f4 60%,#f2f2f2);"></div><svg style="position:absolute;left:36px;top:383px;" width="35" height="35" viewBox="0 0 35 35"><rect x="5.2" y="12.9" width="23.7" height="7.9" rx="1" fill="#fafafa" stroke="#6a6a6a" stroke-width="1"/><path d="M7.2 13.4 V17.6" stroke="#444" stroke-width="0.9"/><path d="M9.17 13.4 V16" stroke="#444" stroke-width="0.9"/><path d="M11.14 13.4 V16" stroke="#444" stroke-width="0.9"/><path d="M13.11 13.4 V16" stroke="#444" stroke-width="0.9"/><path d="M15.08 13.4 V16" stroke="#444" stroke-width="0.9"/><path d="M17.05 13.4 V17.6" stroke="#444" stroke-width="0.9"/><path d="M19.02 13.4 V16" stroke="#444" stroke-width="0.9"/><path d="M20.99 13.4 V16" stroke="#444" stroke-width="0.9"/><path d="M22.96 13.4 V16" stroke="#444" stroke-width="0.9"/><path d="M24.93 13.4 V16" stroke="#444" stroke-width="0.9"/><path d="M26.9 13.4 V17.6" stroke="#444" stroke-width="0.9"/></svg>
<div style="position:absolute;left:1px;top:418px;width:33px;height:33px;border:1px solid #9a9a9a;background:linear-gradient(#dcdcdc,#ececec 30%,#f4f4f4 60%,#f2f2f2);"></div><svg style="position:absolute;left:1px;top:418px;" width="35" height="35" viewBox="0 0 35 35"><rect x="6.6" y="6.6" width="17" height="13.4" fill="#f2ecc8" stroke="#b8b090" stroke-width="1"/><circle cx="19" cy="20" r="6" fill="#ececec" stroke="#999" stroke-width="1"/><path d="M5 20.5 L7.5 23" stroke="#d04040" stroke-width="1"/></svg>
<div style="position:absolute;left:36px;top:418px;width:33px;height:33px;border:1px solid #9a9a9a;background:linear-gradient(#dcdcdc,#ececec 30%,#f4f4f4 60%,#f2f2f2);"></div><svg style="position:absolute;left:36px;top:418px;" width="35" height="35" viewBox="0 0 35 35"><path d="M4.6 17 L23.4 5.6" stroke="#e03030" stroke-width="1.1"/><path d="M15.6 11 V22 H24 Z" fill="none" stroke="#9aa4b4" stroke-width="1"/></svg>
<div style="position:absolute;left:1px;top:461px;width:33px;height:33px;border:1px solid #9a9a9a;background:linear-gradient(#dcdcdc,#ececec 30%,#f4f4f4 60%,#f2f2f2);"></div><svg style="position:absolute;left:1px;top:461px;" width="35" height="35" viewBox="0 0 35 35"><path d="M7.4 12.6 L19.4 6.4 L28.2 11.4 V21 L16.2 27.6 L7.4 22.4 Z M7.4 12.6 L16.2 17.6 L28.2 11.4 M16.2 17.6 V27.6" fill="none" stroke="#2a2a2a" stroke-width="1.1" stroke-linecap="round" stroke-linejoin="round"/><path d="M30 25.3 V29.7 H25.6 Z" fill="#111"/></svg>
<!-- canvas -->
<div style="position:absolute;left:72px;top:108px;width:1082px;height:24px;background:#d3d3d3;"></div>
<span id="t15" style="position:absolute;left:593.40px;top:112.82px;font:11.5px/14px 'Liberation Sans', sans-serif;color:#262626;display:inline-block;transform-origin:0 0;transform:scaleX(1.0379);white-space:pre;-webkit-text-stroke:0.18px #262626;">move_copy.dxf</span>
<div style="position:absolute;left:72px;top:132px;width:1082px;height:23px;background:#ebebeb;"></div>
<div style="position:absolute;left:72px;top:155px;width:23px;height:594px;background:#ebebeb;"></div>
<div style="position:absolute;left:1139px;top:155px;width:15px;height:577px;background:#fafafa;"></div>
<div style="position:absolute;left:95px;top:732px;width:1059px;height:16px;background:#fafafa;"></div>
<div style="position:absolute;left:1143.2px;top:182.3px;width:7.8px;height:357.1px;background:#808080;border-radius:4px;"></div>
<div style="position:absolute;left:1085px;top:733px;width:69px;height:15px;background:#e6e6e6;"></div>
<span id="t16" style="position:absolute;left:1102.60px;top:732.90px;font:13px/16px 'Liberation Sans', sans-serif;color:#111;display:inline-block;transform-origin:0 0;transform:scaleX(0.9888);white-space:pre;-webkit-text-stroke:0.21px #111;">10 &lt; 100</span>
<svg style="position:absolute;left:95px;top:155px;" width="1044" height="577" viewBox="0 0 1044 577"><rect x="0" y="0" width="1044" height="577" fill="#000"/><rect x="99" y="0" width="2" height="577" fill="#101010"/><rect x="499" y="0" width="2" height="577" fill="#101010"/><rect x="899" y="0" width="2" height="577" fill="#101010"/><rect x="0" y="476" width="1044" height="2" fill="#101010"/><rect x="0" y="76" width="1044" height="2" fill="#101010"/><rect x="20" y="557" width="1" height="1" fill="#303030"/><rect x="20" y="517" width="1" height="1" fill="#303030"/><rect x="20" y="477" width="1" height="1" fill="#3a3a3a"/><rect x="20" y="437" width="1" height="1" fill="#303030"/><rect x="20" y="397" width="1" height="1" fill="#303030"/><rect x="20" y="357" width="1" height="1" fill="#303030"/><rect x="20" y="317" width="1" height="1" fill="#303030"/><rect x="20" y="277" width="1" height="1" fill="#303030"/><rect x="20" y="237" width="1" height="1" fill="#303030"/><rect x="20" y="197" width="1" height="1" fill="#303030"/><rect x="20" y="157" width="1" height="1" fill="#303030"/><rect x="20" y="117" width="1" height="1" fill="#303030"/><rect x="20" y="77" width="1" height="1" fill="#3a3a3a"/><rect x="20" y="37" width="1" height="1" fill="#303030"/><rect x="60" y="557" width="1" height="1" fill="#303030"/><rect x="60" y="517" width="1" height="1" fill="#303030"/><rect x="60" y="477" width="1" height="1" fill="#3a3a3a"/><rect x="60" y="437" width="1" height="1" fill="#303030"/><rect x="60" y="397" width="1" height="1" fill="#303030"/><rect x="60" y="357" width="1" height="1" fill="#303030"/><rect x="60" y="317" width="1" height="1" fill="#303030"/><rect x="60" y="277" width="1" height="1" fill="#303030"/><rect x="60" y="237" width="1" height="1" fill="#303030"/><rect x="60" y="197" width="1" height="1" fill="#303030"/><rect x="60" y="157" width="1" height="1" fill="#303030"/><rect x="60" y="117" width="1" height="1" fill="#303030"/><rect x="60" y="77" width="1" height="1" fill="#3a3a3a"/><rect x="60" y="37" width="1" height="1" fill="#303030"/><rect x="100" y="557" width="1" height="1" fill="#3a3a3a"/><rect x="100" y="517" width="1" height="1" fill="#3a3a3a"/><rect x="100" y="477" width="1" height="1" fill="#3a3a3a"/><rect x="100" y="437" width="1" height="1" fill="#3a3a3a"/><rect x="100" y="397" width="1" height="1" fill="#3a3a3a"/><rect x="100" y="357" width="1" height="1" fill="#3a3a3a"/><rect x="100" y="317" width="1" height="1" fill="#3a3a3a"/><rect x="100" y="277" width="1" height="1" fill="#3a3a3a"/><rect x="100" y="237" width="1" height="1" fill="#3a3a3a"/><rect x="100" y="197" width="1" height="1" fill="#3a3a3a"/><rect x="100" y="157" width="1" height="1" fill="#3a3a3a"/><rect x="100" y="117" width="1" height="1" fill="#3a3a3a"/><rect x="100" y="77" width="1" height="1" fill="#3a3a3a"/><rect x="100" y="37" width="1" height="1" fill="#3a3a3a"/><rect x="140" y="557" width="1" height="1" fill="#303030"/><rect x="140" y="517" width="1" height="1" fill="#303030"/><rect x="140" y="477" width="1" height="1" fill="#3a3a3a"/><rect x="140" y="437" width="1" height="1" fill="#303030"/><rect x="140" y="397" width="1" height="1" fill="#303030"/><rect x="140" y="357" width="1" height="1" fill="#303030"/><rect x="140" y="317" width="1" height="1" fill="#303030"/><rect x="140" y="277" width="1" height="1" fill="#303030"/><rect x="140" y="237" width="1" height="1" fill="#303030"/><rect x="140" y="197" width="1" height="1" fill="#303030"/><rect x="140" y="157" width="1" height="1" fill="#303030"/><rect x="140" y="117" width="1" height="1" fill="#303030"/><rect x="140" y="77" width="1" height="1" fill="#3a3a3a"/><rect x="140" y="37" width="1" height="1" fill="#303030"/><rect x="180" y="557" width="1" height="1" fill="#303030"/><rect x="180" y="517" width="1" height="1" fill="#303030"/><rect x="180" y="477" width="1" height="1" fill="#3a3a3a"/><rect x="180" y="437" width="1" height="1" fill="#303030"/><rect x="180" y="397" width="1" height="1" fill="#303030"/><rect x="180" y="357" width="1" height="1" fill="#303030"/><rect x="180" y="317" width="1" height="1" fill="#303030"/><rect x="180" y="277" width="1" height="1" fill="#303030"/><rect x="180" y="237" width="1" height="1" fill="#303030"/><rect x="180" y="197" width="1" height="1" fill="#303030"/><rect x="180" y="157" width="1" height="1" fill="#303030"/><rect x="180" y="117" width="1" height="1" fill="#303030"/><rect x="180" y="77" width="1" height="1" fill="#3a3a3a"/><rect x="180" y="37" width="1" height="1" fill="#303030"/><rect x="220" y="557" width="1" height="1" fill="#303030"/><rect x="220" y="517" width="1" height="1" fill="#303030"/><rect x="220" y="477" width="1" height="1" fill="#3a3a3a"/><rect x="220" y="437" width="1" height="1" fill="#303030"/><rect x="220" y="397" width="1" height="1" fill="#303030"/><rect x="220" y="357" width="1" height="1" fill="#303030"/><rect x="220" y="317" width="1" height="1" fill="#303030"/><rect x="220" y="277" width="1" height="1" fill="#303030"/><rect x="220" y="237" width="1" height="1" fill="#303030"/><rect x="220" y="197" width="1" height="1" fill="#303030"/><rect x="220" y="157" width="1" height="1" fill="#303030"/><rect x="220" y="117" width="1" height="1" fill="#303030"/><rect x="220" y="77" width="1" height="1" fill="#3a3a3a"/><rect x="220" y="37" width="1" height="1" fill="#303030"/><rect x="260" y="557" width="1" height="1" fill="#303030"/><rect x="260" y="517" width="1" height="1" fill="#303030"/><rect x="260" y="477" width="1" height="1" fill="#3a3a3a"/><rect x="260" y="437" width="1" height="1" fill="#303030"/><rect x="260" y="397" width="1" height="1" fill="#303030"/><rect x="260" y="357" width="1" height="1" fill="#303030"/><rect x="260" y="317" width="1" height="1" fill="#303030"/><rect x="260" y="277" width="1" height="1" fill="#303030"/><rect x="260" y="237" width="1" height="1" fill="#303030"/><rect x="260" y="197" width="1" height="1" fill="#303030"/><rect x="260" y="157" width="1" height="1" fill="#303030"/><rect x="260" y="117" width="1" height="1" fill="#303030"/><rect x="260" y="77" width="1" height="1" fill="#3a3a3a"/><rect x="260" y="37" width="1" height="1" fill="#303030"/><rect x="300" y="557" width="1" height="1" fill="#303030"/><rect x="300" y="517" width="1" height="1" fill="#303030"/><rect x="300" y="477" width="1" height="1" fill="#3a3a3a"/><rect x="300" y="437" width="1" height="1" fill="#303030"/><rect x="300" y="397" width="1" height="1" fill="#303030"/><rect x="300" y="357" width="1" height="1" fill="#303030"/><rect x="300" y="317" width="1" height="1" fill="#303030"/><rect x="300" y="277" width="1" height="1" fill="#303030"/><rect x="300" y="237" width="1" height="1" fill="#303030"/><rect x="300" y="197" width="1" height="1" fill="#303030"/><rect x="300" y="157" width="1" height="1" fill="#303030"/><rect x="300" y="117" width="1" height="1" fill="#303030"/><rect x="300" y="77" width="1" height="1" fill="#3a3a3a"/><rect x="300" y="37" width="1" height="1" fill="#303030"/><rect x="340" y="557" width="1" height="1" fill="#303030"/><rect x="340" y="517" width="1" height="1" fill="#303030"/><rect x="340" y="477" width="1" height="1" fill="#3a3a3a"/><rect x="340" y="437" width="1" height="1" fill="#303030"/><rect x="340" y="397" width="1" height="1" fill="#303030"/><rect x="340" y="357" width="1" height="1" fill="#303030"/><rect x="340" y="317" width="1" height="1" fill="#303030"/><rect x="340" y="277" width="1" height="1" fill="#303030"/><rect x="340" y="237" width="1" height="1" fill="#303030"/><rect x="340" y="197" width="1" height="1" fill="#303030"/><rect x="340" y="157" width="1" height="1" fill="#303030"/><rect x="340" y="117" width="1" height="1" fill="#303030"/><rect x="340" y="77" width="1" height="1" fill="#3a3a3a"/><rect x="340" y="37" width="1" height="1" fill="#303030"/><rect x="380" y="557" width="1" height="1" fill="#303030"/><rect x="380" y="517" width="1" height="1" fill="#303030"/><rect x="380" y="477" width="1" height="1" fill="#3a3a3a"/><rect x="380" y="437" width="1" height="1" fill="#303030"/><rect x="380" y="397" width="1" height="1" fill="#303030"/><rect x="380" y="357" width="1" height="1" fill="#303030"/><rect x="380" y="317" width="1" height="1" fill="#303030"/><rect x="380" y="277" width="1" height="1" fill="#303030"/><rect x="380" y="237" width="1" height="1" fill="#303030"/><rect x="380" y="197" width="1" height="1" fill="#303030"/><rect x="380" y="157" width="1" height="1" fill="#303030"/><rect x="380" y="117" width="1" height="1" fill="#303030"/><rect x="380" y="77" width="1" height="1" fill="#3a3a3a"/><rect x="380" y="37" width="1" height="1" fill="#303030"/><rect x="420" y="557" width="1" height="1" fill="#303030"/><rect x="420" y="517" width="1" height="1" fill="#303030"/><rect x="420" y="477" width="1" height="1" fill="#3a3a3a"/><rect x="420" y="437" width="1" height="1" fill="#303030"/><rect x="420" y="397" width="1" height="1" fill="#303030"/><rect x="420" y="357" width="1" height="1" fill="#303030"/><rect x="420" y="317" width="1" height="1" fill="#303030"/><rect x="420" y="277" width="1" height="1" fill="#303030"/><rect x="420" y="237" width="1" height="1" fill="#303030"/><rect x="420" y="197" width="1" height="1" fill="#303030"/><rect x="420" y="157" width="1" height="1" fill="#303030"/><rect x="420" y="117" width="1" height="1" fill="#303030"/><rect x="420" y="77" width="1" height="1" fill="#3a3a3a"/><rect x="420" y="37" width="1" height="1" fill="#303030"/><rect x="460" y="557" width="1" height="1" fill="#303030"/><rect x="460" y="517" width="1" height="1" fill="#303030"/><rect x="460" y="477" width="1" height="1" fill="#3a3a3a"/><rect x="460" y="437" width="1" height="1" fill="#303030"/><rect x="460" y="397" width="1" height="1" fill="#303030"/><rect x="460" y="357" width="1" height="1" fill="#303030"/><rect x="460" y="317" width="1" height="1" fill="#303030"/><rect x="460" y="277" width="1" height="1" fill="#303030"/><rect x="460" y="237" width="1" height="1" fill="#303030"/><rect x="460" y="197" width="1" height="1" fill="#303030"/><rect x="460" y="157" width="1" height="1" fill="#303030"/><rect x="460" y="117" width="1" height="1" fill="#303030"/><rect x="460" y="77" width="1" height="1" fill="#3a3a3a"/><rect x="460" y="37" width="1" height="1" fill="#303030"/><rect x="500" y="557" width="1" height="1" fill="#3a3a3a"/><rect x="500" y="517" width="1" height="1" fill="#3a3a3a"/><rect x="500" y="477" width="1" height="1" fill="#3a3a3a"/><rect x="500" y="437" width="1" height="1" fill="#3a3a3a"/><rect x="500" y="397" width="1" height="1" fill="#3a3a3a"/><rect x="500" y="357" width="1" height="1" fill="#3a3a3a"/><rect x="500" y="317" width="1" height="1" fill="#3a3a3a"/><rect x="500" y="277" width="1" height="1" fill="#3a3a3a"/><rect x="500" y="237" width="1" height="1" fill="#3a3a3a"/><rect x="500" y="197" width="1" height="1" fill="#3a3a3a"/><rect x="500" y="157" width="1" height="1" fill="#3a3a3a"/><rect x="500" y="117" width="1" height="1" fill="#3a3a3a"/><rect x="500" y="77" width="1" height="1" fill="#3a3a3a"/><rect x="500" y="37" width="1" height="1" fill="#3a3a3a"/><rect x="540" y="557" width="1" height="1" fill="#303030"/><rect x="540" y="517" width="1" height="1" fill="#303030"/><rect x="540" y="477" width="1" height="1" fill="#3a3a3a"/><rect x="540" y="437" width="1" height="1" fill="#303030"/><rect x="540" y="397" width="1" height="1" fill="#303030"/><rect x="540" y="357" width="1" height="1" fill="#303030"/><rect x="540" y="317" width="1" height="1" fill="#303030"/><rect x="540" y="277" width="1" height="1" fill="#303030"/><rect x="540" y="237" width="1" height="1" fill="#303030"/><rect x="540" y="197" width="1" height="1" fill="#303030"/><rect x="540" y="157" width="1" height="1" fill="#303030"/><rect x="540" y="117" width="1" height="1" fill="#303030"/><rect x="540" y="77" width="1" height="1" fill="#3a3a3a"/><rect x="540" y="37" width="1" height="1" fill="#303030"/><rect x="580" y="557" width="1" height="1" fill="#303030"/><rect x="580" y="517" width="1" height="1" fill="#303030"/><rect x="580" y="477" width="1" height="1" fill="#3a3a3a"/><rect x="580" y="437" width="1" height="1" fill="#303030"/><rect x="580" y="397" width="1" height="1" fill="#303030"/><rect x="580" y="357" width="1" height="1" fill="#303030"/><rect x="580" y="317" width="1" height="1" fill="#303030"/><rect x="580" y="277" width="1" height="1" fill="#303030"/><rect x="580" y="237" width="1" height="1" fill="#303030"/><rect x="580" y="197" width="1" height="1" fill="#303030"/><rect x="580" y="157" width="1" height="1" fill="#303030"/><rect x="580" y="117" width="1" height="1" fill="#303030"/><rect x="580" y="77" width="1" height="1" fill="#3a3a3a"/><rect x="580" y="37" width="1" height="1" fill="#303030"/><rect x="620" y="557" width="1" height="1" fill="#303030"/><rect x="620" y="517" width="1" height="1" fill="#303030"/><rect x="620" y="477" width="1" height="1" fill="#3a3a3a"/><rect x="620" y="437" width="1" height="1" fill="#303030"/><rect x="620" y="397" width="1" height="1" fill="#303030"/><rect x="620" y="357" width="1" height="1" fill="#303030"/><rect x="620" y="317" width="1" height="1" fill="#303030"/><rect x="620" y="277" width="1" height="1" fill="#303030"/><rect x="620" y="237" width="1" height="1" fill="#303030"/><rect x="620" y="197" width="1" height="1" fill="#303030"/><rect x="620" y="157" width="1" height="1" fill="#303030"/><rect x="620" y="117" width="1" height="1" fill="#303030"/><rect x="620" y="77" width="1" height="1" fill="#3a3a3a"/><rect x="620" y="37" width="1" height="1" fill="#303030"/><rect x="660" y="557" width="1" height="1" fill="#303030"/><rect x="660" y="517" width="1" height="1" fill="#303030"/><rect x="660" y="477" width="1" height="1" fill="#3a3a3a"/><rect x="660" y="437" width="1" height="1" fill="#303030"/><rect x="660" y="397" width="1" height="1" fill="#303030"/><rect x="660" y="357" width="1" height="1" fill="#303030"/><rect x="660" y="317" width="1" height="1" fill="#303030"/><rect x="660" y="277" width="1" height="1" fill="#303030"/><rect x="660" y="237" width="1" height="1" fill="#303030"/><rect x="660" y="197" width="1" height="1" fill="#303030"/><rect x="660" y="157" width="1" height="1" fill="#303030"/><rect x="660" y="117" width="1" height="1" fill="#303030"/><rect x="660" y="77" width="1" height="1" fill="#3a3a3a"/><rect x="660" y="37" width="1" height="1" fill="#303030"/><rect x="700" y="557" width="1" height="1" fill="#303030"/><rect x="700" y="517" width="1" height="1" fill="#303030"/><rect x="700" y="477" width="1" height="1" fill="#3a3a3a"/><rect x="700" y="437" width="1" height="1" fill="#303030"/><rect x="700" y="397" width="1" height="1" fill="#303030"/><rect x="700" y="357" width="1" height="1" fill="#303030"/><rect x="700" y="317" width="1" height="1" fill="#303030"/><rect x="700" y="277" width="1" height="1" fill="#303030"/><rect x="700" y="237" width="1" height="1" fill="#303030"/><rect x="700" y="197" width="1" height="1" fill="#303030"/><rect x="700" y="157" width="1" height="1" fill="#303030"/><rect x="700" y="117" width="1" height="1" fill="#303030"/><rect x="700" y="77" width="1" height="1" fill="#3a3a3a"/><rect x="700" y="37" width="1" height="1" fill="#303030"/><rect x="740" y="557" width="1" height="1" fill="#303030"/><rect x="740" y="517" width="1" height="1" fill="#303030"/><rect x="740" y="477" width="1" height="1" fill="#3a3a3a"/><rect x="740" y="437" width="1" height="1" fill="#303030"/><rect x="740" y="397" width="1" height="1" fill="#303030"/><rect x="740" y="357" width="1" height="1" fill="#303030"/><rect x="740" y="317" width="1" height="1" fill="#303030"/><rect x="740" y="277" width="1" height="1" fill="#303030"/><rect x="740" y="237" width="1" height="1" fill="#303030"/><rect x="740" y="197" width="1" height="1" fill="#303030"/><rect x="740" y="157" width="1" height="1" fill="#303030"/><rect x="740" y="117" width="1" height="1" fill="#303030"/><rect x="740" y="77" width="1" height="1" fill="#3a3a3a"/><rect x="740" y="37" width="1" height="1" fill="#303030"/><rect x="780" y="557" width="1" height="1" fill="#303030"/><rect x="780" y="517" width="1" height="1" fill="#303030"/><rect x="780" y="477" width="1" height="1" fill="#3a3a3a"/><rect x="780" y="437" width="1" height="1" fill="#303030"/><rect x="780" y="397" width="1" height="1" fill="#303030"/><rect x="780" y="357" width="1" height="1" fill="#303030"/><rect x="780" y="317" width="1" height="1" fill="#303030"/><rect x="780" y="277" width="1" height="1" fill="#303030"/><rect x="780" y="237" width="1" height="1" fill="#303030"/><rect x="780" y="197" width="1" height="1" fill="#303030"/><rect x="780" y="157" width="1" height="1" fill="#303030"/><rect x="780" y="117" width="1" height="1" fill="#303030"/><rect x="780" y="77" width="1" height="1" fill="#3a3a3a"/><rect x="780" y="37" width="1" height="1" fill="#303030"/><rect x="820" y="557" width="1" height="1" fill="#303030"/><rect x="820" y="517" width="1" height="1" fill="#303030"/><rect x="820" y="477" width="1" height="1" fill="#3a3a3a"/><rect x="820" y="437" width="1" height="1" fill="#303030"/><rect x="820" y="397" width="1" height="1" fill="#303030"/><rect x="820" y="357" width="1" height="1" fill="#303030"/><rect x="820" y="317" width="1" height="1" fill="#303030"/><rect x="820" y="277" width="1" height="1" fill="#303030"/><rect x="820" y="237" width="1" height="1" fill="#303030"/><rect x="820" y="197" width="1" height="1" fill="#303030"/><rect x="820" y="157" width="1" height="1" fill="#303030"/><rect x="820" y="117" width="1" height="1" fill="#303030"/><rect x="820" y="77" width="1" height="1" fill="#3a3a3a"/><rect x="820" y="37" width="1" height="1" fill="#303030"/><rect x="860" y="557" width="1" height="1" fill="#303030"/><rect x="860" y="517" width="1" height="1" fill="#303030"/><rect x="860" y="477" width="1" height="1" fill="#3a3a3a"/><rect x="860" y="437" width="1" height="1" fill="#303030"/><rect x="860" y="397" width="1" height="1" fill="#303030"/><rect x="860" y="357" width="1" height="1" fill="#303030"/><rect x="860" y="317" width="1" height="1" fill="#303030"/><rect x="860" y="277" width="1" height="1" fill="#303030"/><rect x="860" y="237" width="1" height="1" fill="#303030"/><rect x="860" y="197" width="1" height="1" fill="#303030"/><rect x="860" y="157" width="1" height="1" fill="#303030"/><rect x="860" y="117" width="1" height="1" fill="#303030"/><rect x="860" y="77" width="1" height="1" fill="#3a3a3a"/><rect x="860" y="37" width="1" height="1" fill="#303030"/><rect x="900" y="557" width="1" height="1" fill="#3a3a3a"/><rect x="900" y="517" width="1" height="1" fill="#3a3a3a"/><rect x="900" y="477" width="1" height="1" fill="#3a3a3a"/><rect x="900" y="437" width="1" height="1" fill="#3a3a3a"/><rect x="900" y="397" width="1" height="1" fill="#3a3a3a"/><rect x="900" y="357" width="1" height="1" fill="#3a3a3a"/><rect x="900" y="317" width="1" height="1" fill="#3a3a3a"/><rect x="900" y="277" width="1" height="1" fill="#3a3a3a"/><rect x="900" y="237" width="1" height="1" fill="#3a3a3a"/><rect x="900" y="197" width="1" height="1" fill="#3a3a3a"/><rect x="900" y="157" width="1" height="1" fill="#3a3a3a"/><rect x="900" y="117" width="1" height="1" fill="#3a3a3a"/><rect x="900" y="77" width="1" height="1" fill="#3a3a3a"/><rect x="900" y="37" width="1" height="1" fill="#3a3a3a"/><rect x="940" y="557" width="1" height="1" fill="#303030"/><rect x="940" y="517" width="1" height="1" fill="#303030"/><rect x="940" y="477" width="1" height="1" fill="#3a3a3a"/><rect x="940" y="437" width="1" height="1" fill="#303030"/><rect x="940" y="397" width="1" height="1" fill="#303030"/><rect x="940" y="357" width="1" height="1" fill="#303030"/><rect x="940" y="317" width="1" height="1" fill="#303030"/><rect x="940" y="277" width="1" height="1" fill="#303030"/><rect x="940" y="237" width="1" height="1" fill="#303030"/><rect x="940" y="197" width="1" height="1" fill="#303030"/><rect x="940" y="157" width="1" height="1" fill="#303030"/><rect x="940" y="117" width="1" height="1" fill="#303030"/><rect x="940" y="77" width="1" height="1" fill="#3a3a3a"/><rect x="940" y="37" width="1" height="1" fill="#303030"/><rect x="980" y="557" width="1" height="1" fill="#303030"/><rect x="980" y="517" width="1" height="1" fill="#303030"/><rect x="980" y="477" width="1" height="1" fill="#3a3a3a"/><rect x="980" y="437" width="1" height="1" fill="#303030"/><rect x="980" y="397" width="1" height="1" fill="#303030"/><rect x="980" y="357" width="1" height="1" fill="#303030"/><rect x="980" y="317" width="1" height="1" fill="#303030"/><rect x="980" y="277" width="1" height="1" fill="#303030"/><rect x="980" y="237" width="1" height="1" fill="#303030"/><rect x="980" y="197" width="1" height="1" fill="#303030"/><rect x="980" y="157" width="1" height="1" fill="#303030"/><rect x="980" y="117" width="1" height="1" fill="#303030"/><rect x="980" y="77" width="1" height="1" fill="#3a3a3a"/><rect x="980" y="37" width="1" height="1" fill="#303030"/><rect x="1020" y="557" width="1" height="1" fill="#303030"/><rect x="1020" y="517" width="1" height="1" fill="#303030"/><rect x="1020" y="477" width="1" height="1" fill="#3a3a3a"/><rect x="1020" y="437" width="1" height="1" fill="#303030"/><rect x="1020" y="397" width="1" height="1" fill="#303030"/><rect x="1020" y="357" width="1" height="1" fill="#303030"/><rect x="1020" y="317" width="1" height="1" fill="#303030"/><rect x="1020" y="277" width="1" height="1" fill="#303030"/><rect x="1020" y="237" width="1" height="1" fill="#303030"/><rect x="1020" y="197" width="1" height="1" fill="#303030"/><rect x="1020" y="157" width="1" height="1" fill="#303030"/><rect x="1020" y="117" width="1" height="1" fill="#303030"/><rect x="1020" y="77" width="1" height="1" fill="#3a3a3a"/><rect x="1020" y="37" width="1" height="1" fill="#303030"/><path d="M 116.00 381.00 L 136.40 381.00" stroke="#880606" stroke-width="1.05" stroke-dasharray="1.6 1.2 1 1.2 10 1.2 1 1.2 2 99" fill="none"/><path d="M 116.00 381.00 L 95.60 381.00" stroke="#880606" stroke-width="1.05" stroke-dasharray="1.6 1.2 1 1.2 10 1.2 1 1.2 2 99" fill="none"/><path d="M 116.00 381.00 L 116.00 401.40" stroke="#880606" stroke-width="1.05" stroke-dasharray="1.6 1.2 1 1.2 10 1.2 1 1.2 2 99" fill="none"/><path d="M 116.00 381.00 L 116.00 360.60" stroke="#880606" stroke-width="1.05" stroke-dasharray="1.6 1.2 1 1.2 10 1.2 1 1.2 2 99" fill="none"/><circle cx="116.00" cy="381.00" r="1.5" fill="#9a0404"/><path d="M 116.00 461.00 L 136.40 461.00" stroke="#880606" stroke-width="1.05" stroke-dasharray="1.6 1.2 1 1.2 10 1.2 1 1.2 2 99" fill="none"/><path d="M 116.00 461.00 L 95.60 461.00" stroke="#880606" stroke-width="1.05" stroke-dasharray="1.6 1.2 1 1.2 10 1.2 1 1.2 2 99" fill="none"/><path d="M 116.00 461.00 L 116.00 481.40" stroke="#880606" stroke-width="1.05" stroke-dasharray="1.6 1.2 1 1.2 10 1.2 1 1.2 2 99" fill="none"/><path d="M 116.00 461.00 L 116.00 440.60" stroke="#880606" stroke-width="1.05" stroke-dasharray="1.6 1.2 1 1.2 10 1.2 1 1.2 2 99" fill="none"/><circle cx="116.00" cy="461.00" r="1.5" fill="#9a0404"/><path d="M 276.00 461.00 L 296.40 461.00" stroke="#880606" stroke-width="1.05" stroke-dasharray="1.6 1.2 1 1.2 10 1.2 1 1.2 2 99" fill="none"/><path d="M 276.00 461.00 L 255.60 461.00" stroke="#880606" stroke-width="1.05" stroke-dasharray="1.6 1.2 1 1.2 10 1.2 1 1.2 2 99" fill="none"/><path d="M 276.00 461.00 L 276.00 481.40" stroke="#880606" stroke-width="1.05" stroke-dasharray="1.6 1.2 1 1.2 10 1.2 1 1.2 2 99" fill="none"/><path d="M 276.00 461.00 L 276.00 440.60" stroke="#880606" stroke-width="1.05" stroke-dasharray="1.6 1.2 1 1.2 10 1.2 1 1.2 2 99" fill="none"/><circle cx="276.00" cy="461.00" r="1.5" fill="#9a0404"/><path d="M 164.00 401.00 L 185.40 401.00" stroke="#880606" stroke-width="1.05" stroke-dasharray="1.6 1.2 1 1.2 10 1.2 1 1.2 3 99" fill="none"/><path d="M 164.00 401.00 L 142.60 401.00" stroke="#880606" stroke-width="1.05" stroke-dasharray="1.6 1.2 1 1.2 10 1.2 1 1.2 3 99" fill="none"/><path d="M 164.00 401.00 L 164.00 422.40" stroke="#880606" stroke-width="1.05" stroke-dasharray="1.6 1.2 1 1.2 10 1.2 1 1.2 3 99" fill="none"/><path d="M 164.00 401.00 L 164.00 379.60" stroke="#880606" stroke-width="1.05" stroke-dasharray="1.6 1.2 1 1.2 10 1.2 1 1.2 3 99" fill="none"/><circle cx="164.00" cy="401.00" r="1.5" fill="#9a0404"/><path d="M 228.00 441.00 L 249.40 441.00" stroke="#880606" stroke-width="1.05" stroke-dasharray="1.6 1.2 1 1.2 10 1.2 1 1.2 3 99" fill="none"/><path d="M 228.00 441.00 L 206.60 441.00" stroke="#880606" stroke-width="1.05" stroke-dasharray="1.6 1.2 1 1.2 10 1.2 1 1.2 3 99" fill="none"/><path d="M 228.00 441.00 L 228.00 462.40" stroke="#880606" stroke-width="1.05" stroke-dasharray="1.6 1.2 1 1.2 10 1.2 1 1.2 3 99" fill="none"/><path d="M 228.00 441.00 L 228.00 419.60" stroke="#880606" stroke-width="1.05" stroke-dasharray="1.6 1.2 1 1.2 10 1.2 1 1.2 3 99" fill="none"/><circle cx="228.00" cy="441.00" r="1.5" fill="#9a0404"/><path d="M 100.00 461.00 L 100.00 381.00 A 16 16 0 0 1 116.00 365.00 L 171.45 365.00 A 16 16 0 0 1 179.87 367.39 L 284.41 432.02 A 16 16 0 0 1 292.00 445.63 L 292.00 461.00 A 16 16 0 0 1 276.00 477.00 L 116.00 477.00 A 16 16 0 0 1 100.00 461.00 Z" fill="none" stroke="#d4d4d4" stroke-width="1.35"/><path d="M 104.40 461.00 L 104.40 381.00 A 11.6 11.6 0 0 1 116.00 369.40 L 171.45 369.40 A 11.6 11.6 0 0 1 177.55 371.13 L 282.10 435.76 A 11.6 11.6 0 0 1 287.60 445.63 L 287.60 461.00 A 11.6 11.6 0 0 1 276.00 472.60 L 116.00 472.60 A 11.6 11.6 0 0 1 104.40 461.00 Z" fill="none" stroke="#d4d4d4" stroke-width="0.95"/><circle cx="116.00" cy="381.00" r="3.85" fill="none" stroke="#f2f2f2" stroke-width="1.3"/><circle cx="116.00" cy="461.00" r="3.85" fill="none" stroke="#f2f2f2" stroke-width="1.3"/><circle cx="276.00" cy="461.00" r="3.85" fill="none" stroke="#f2f2f2" stroke-width="1.3"/><circle cx="164.00" cy="401.00" r="12.7" fill="none" stroke="#f2f2f2" stroke-width="1.35"/><circle cx="228.00" cy="441.00" r="12.7" fill="none" stroke="#f2f2f2" stroke-width="1.35"/><path d="M 80.00 477.00 H 120.00 M 100.00 457.00 V 497.00" stroke="#8a0000" stroke-opacity="0.85" stroke-width="1.5" fill="none"/><circle cx="100.00" cy="477.00" r="5.1" fill="none" stroke="#8a0000" stroke-width="1.1"/></svg>
<div style="position:absolute;left:114.5px;top:148px;width:1px;height:7px;background:#6e6e6e;"></div>
<span id="t17" style="position:absolute;left:108.89px;top:132.58px;font:9px/11px 'Liberation Sans', sans-serif;color:#1c1c1c;display:inline-block;transform-origin:0 0;transform:scaleX(0.9400);white-space:pre;-webkit-text-stroke:0.14px #1c1c1c;">-20</span>
<div style="position:absolute;left:154.5px;top:148px;width:1px;height:7px;background:#6e6e6e;"></div>
<span id="t18" style="position:absolute;left:148.89px;top:132.58px;font:9px/11px 'Liberation Sans', sans-serif;color:#1c1c1c;display:inline-block;transform-origin:0 0;transform:scaleX(0.9400);white-space:pre;-webkit-text-stroke:0.14px #1c1c1c;">-10</span>
<div style="position:absolute;left:194.5px;top:148px;width:1px;height:7px;background:#6e6e6e;"></div>
<span id="t19" style="position:absolute;left:192.65px;top:132.58px;font:9px/11px 'Liberation Sans', sans-serif;color:#1c1c1c;display:inline-block;transform-origin:0 0;transform:scaleX(0.9400);white-space:pre;-webkit-text-stroke:0.14px #1c1c1c;">0</span>
<div style="position:absolute;left:234.5px;top:148px;width:1px;height:7px;background:#6e6e6e;"></div>
<span id="t20" style="position:absolute;left:230.30px;top:132.58px;font:9px/11px 'Liberation Sans', sans-serif;color:#1c1c1c;display:inline-block;transform-origin:0 0;transform:scaleX(0.9400);white-space:pre;-webkit-text-stroke:0.14px #1c1c1c;">10</span>
<div style="position:absolute;left:274.5px;top:148px;width:1px;height:7px;background:#6e6e6e;"></div>
<span id="t21" style="position:absolute;left:270.30px;top:132.58px;font:9px/11px 'Liberation Sans', sans-serif;color:#1c1c1c;display:inline-block;transform-origin:0 0;transform:scaleX(0.9400);white-space:pre;-webkit-text-stroke:0.14px #1c1c1c;">20</span>
<div style="position:absolute;left:314.5px;top:148px;width:1px;height:7px;background:#6e6e6e;"></div>
<span id="t22" style="position:absolute;left:310.30px;top:132.58px;font:9px/11px 'Liberation Sans', sans-serif;color:#1c1c1c;display:inline-block;transform-origin:0 0;transform:scaleX(0.9400);white-space:pre;-webkit-text-stroke:0.14px #1c1c1c;">30</span>
<div style="position:absolute;left:354.5px;top:148px;width:1px;height:7px;background:#6e6e6e;"></div>
<span id="t23" style="position:absolute;left:350.30px;top:132.58px;font:9px/11px 'Liberation Sans', sans-serif;color:#1c1c1c;display:inline-block;transform-origin:0 0;transform:scaleX(0.9400);white-space:pre;-webkit-text-stroke:0.14px #1c1c1c;">40</span>
<div style="position:absolute;left:394.5px;top:148px;width:1px;height:7px;background:#6e6e6e;"></div>
<span id="t24" style="position:absolute;left:390.30px;top:132.58px;font:9px/11px 'Liberation Sans', sans-serif;color:#1c1c1c;display:inline-block;transform-origin:0 0;transform:scaleX(0.9400);white-space:pre;-webkit-text-stroke:0.14px #1c1c1c;">50</span>
<div style="position:absolute;left:434.5px;top:148px;width:1px;height:7px;background:#6e6e6e;"></div>
<span id="t25" style="position:absolute;left:430.30px;top:132.58px;font:9px/11px 'Liberation Sans', sans-serif;color:#1c1c1c;display:inline-block;transform-origin:0 0;transform:scaleX(0.9400);white-space:pre;-webkit-text-stroke:0.14px #1c1c1c;">60</span>
<div style="position:absolute;left:474.5px;top:148px;width:1px;height:7px;background:#6e6e6e;"></div>
<span id="t26" style="position:absolute;left:470.30px;top:132.58px;font:9px/11px 'Liberation Sans', sans-serif;color:#1c1c1c;display:inline-block;transform-origin:0 0;transform:scaleX(0.9400);white-space:pre;-webkit-text-stroke:0.14px #1c1c1c;">70</span>
<div style="position:absolute;left:514.5px;top:148px;width:1px;height:7px;background:#6e6e6e;"></div>
<span id="t27" style="position:absolute;left:510.30px;top:132.58px;font:9px/11px 'Liberation Sans', sans-serif;color:#1c1c1c;display:inline-block;transform-origin:0 0;transform:scaleX(0.9400);white-space:pre;-webkit-text-stroke:0.14px #1c1c1c;">80</span>
<div style="position:absolute;left:554.5px;top:148px;width:1px;height:7px;background:#6e6e6e;"></div>
<span id="t28" style="position:absolute;left:550.30px;top:132.58px;font:9px/11px 'Liberation Sans', sans-serif;color:#1c1c1c;display:inline-block;transform-origin:0 0;transform:scaleX(0.9400);white-space:pre;-webkit-text-stroke:0.14px #1c1c1c;">90</span>
<div style="position:absolute;left:594.5px;top:148px;width:1px;height:7px;background:#6e6e6e;"></div>
<span id="t29" style="position:absolute;left:587.94px;top:132.58px;font:9px/11px 'Liberation Sans', sans-serif;color:#1c1c1c;display:inline-block;transform-origin:0 0;transform:scaleX(0.9400);white-space:pre;-webkit-text-stroke:0.14px #1c1c1c;">100</span>
<div style="position:absolute;left:634.5px;top:148px;width:1px;height:7px;background:#6e6e6e;"></div>
<span id="t30" style="position:absolute;left:627.94px;top:132.58px;font:9px/11px 'Liberation Sans', sans-serif;color:#1c1c1c;display:inline-block;transform-origin:0 0;transform:scaleX(0.9400);white-space:pre;-webkit-text-stroke:0.14px #1c1c1c;">110</span>
<div style="position:absolute;left:674.5px;top:148px;width:1px;height:7px;background:#6e6e6e;"></div>
<span id="t31" style="position:absolute;left:667.94px;top:132.58px;font:9px/11px 'Liberation Sans', sans-serif;color:#1c1c1c;display:inline-block;transform-origin:0 0;transform:scaleX(0.9400);white-space:pre;-webkit-text-stroke:0.14px #1c1c1c;">120</span>
<div style="position:absolute;left:714.5px;top:148px;width:1px;height:7px;background:#6e6e6e;"></div>
<span id="t32" style="position:absolute;left:707.94px;top:132.58px;font:9px/11px 'Liberation Sans', sans-serif;color:#1c1c1c;display:inline-block;transform-origin:0 0;transform:scaleX(0.9400);white-space:pre;-webkit-text-stroke:0.14px #1c1c1c;">130</span>
<div style="position:absolute;left:754.5px;top:148px;width:1px;height:7px;background:#6e6e6e;"></div>
<span id="t33" style="position:absolute;left:747.94px;top:132.58px;font:9px/11px 'Liberation Sans', sans-serif;color:#1c1c1c;display:inline-block;transform-origin:0 0;transform:scaleX(0.9400);white-space:pre;-webkit-text-stroke:0.14px #1c1c1c;">140</span>
<div style="position:absolute;left:794.5px;top:148px;width:1px;height:7px;background:#6e6e6e;"></div>
<span id="t34" style="position:absolute;left:787.94px;top:132.58px;font:9px/11px 'Liberation Sans', sans-serif;color:#1c1c1c;display:inline-block;transform-origin:0 0;transform:scaleX(0.9400);white-space:pre;-webkit-text-stroke:0.14px #1c1c1c;">150</span>
<div style="position:absolute;left:834.5px;top:148px;width:1px;height:7px;background:#6e6e6e;"></div>
<span id="t35" style="position:absolute;left:827.94px;top:132.58px;font:9px/11px 'Liberation Sans', sans-serif;color:#1c1c1c;display:inline-block;transform-origin:0 0;transform:scaleX(0.9400);white-space:pre;-webkit-text-stroke:0.14px #1c1c1c;">160</span>
<div style="position:absolute;left:874.5px;top:148px;width:1px;height:7px;background:#6e6e6e;"></div>
<span id="t36" style="position:absolute;left:867.94px;top:132.58px;font:9px/11px 'Liberation Sans', sans-serif;color:#1c1c1c;display:inline-block;transform-origin:0 0;transform:scaleX(0.9400);white-space:pre;-webkit-text-stroke:0.14px #1c1c1c;">170</span>
<div style="position:absolute;left:914.5px;top:148px;width:1px;height:7px;background:#6e6e6e;"></div>
<span id="t37" style="position:absolute;left:907.94px;top:132.58px;font:9px/11px 'Liberation Sans', sans-serif;color:#1c1c1c;display:inline-block;transform-origin:0 0;transform:scaleX(0.9400);white-space:pre;-webkit-text-stroke:0.14px #1c1c1c;">180</span>
<div style="position:absolute;left:954.5px;top:148px;width:1px;height:7px;background:#6e6e6e;"></div>
<span id="t38" style="position:absolute;left:947.94px;top:132.58px;font:9px/11px 'Liberation Sans', sans-serif;color:#1c1c1c;display:inline-block;transform-origin:0 0;transform:scaleX(0.9400);white-space:pre;-webkit-text-stroke:0.14px #1c1c1c;">190</span>
<div style="position:absolute;left:994.5px;top:148px;width:1px;height:7px;background:#6e6e6e;"></div>
<span id="t39" style="position:absolute;left:987.94px;top:132.58px;font:9px/11px 'Liberation Sans', sans-serif;color:#1c1c1c;display:inline-block;transform-origin:0 0;transform:scaleX(0.9400);white-space:pre;-webkit-text-stroke:0.14px #1c1c1c;">200</span>
<div style="position:absolute;left:1034.5px;top:148px;width:1px;height:7px;background:#6e6e6e;"></div>
<span id="t40" style="position:absolute;left:1027.94px;top:132.58px;font:9px/11px 'Liberation Sans', sans-serif;color:#1c1c1c;display:inline-block;transform-origin:0 0;transform:scaleX(0.9400);white-space:pre;-webkit-text-stroke:0.14px #1c1c1c;">210</span>
<div style="position:absolute;left:1074.5px;top:148px;width:1px;height:7px;background:#6e6e6e;"></div>
<span id="t41" style="position:absolute;left:1067.94px;top:132.58px;font:9px/11px 'Liberation Sans', sans-serif;color:#1c1c1c;display:inline-block;transform-origin:0 0;transform:scaleX(0.9400);white-space:pre;-webkit-text-stroke:0.14px #1c1c1c;">220</span>
<div style="position:absolute;left:1114.5px;top:148px;width:1px;height:7px;background:#6e6e6e;"></div>
<span id="t42" style="position:absolute;left:1107.94px;top:132.58px;font:9px/11px 'Liberation Sans', sans-serif;color:#1c1c1c;display:inline-block;transform-origin:0 0;transform:scaleX(0.9400);white-space:pre;-webkit-text-stroke:0.14px #1c1c1c;">230</span>
<div style="position:absolute;left:88px;top:711.5px;width:7px;height:1px;background:#6e6e6e;"></div>
<div style="position:absolute;left:72px;top:711.7px;width:0;height:0;transform:rotate(-90deg);transform-origin:0 0;"><span id="t43" style="position:absolute;left:-6.11px;top:0.78px;font:9px/11px 'Liberation Sans', sans-serif;color:#1c1c1c;display:inline-block;transform-origin:0 0;transform:scaleX(0.9400);white-space:pre;-webkit-text-stroke:0.14px #1c1c1c;">-20</span></div>
<div style="position:absolute;left:88px;top:671.5px;width:7px;height:1px;background:#6e6e6e;"></div>
<div style="position:absolute;left:72px;top:671.7px;width:0;height:0;transform:rotate(-90deg);transform-origin:0 0;"><span id="t44" style="position:absolute;left:-6.11px;top:0.78px;font:9px/11px 'Liberation Sans', sans-serif;color:#1c1c1c;display:inline-block;transform-origin:0 0;transform:scaleX(0.9400);white-space:pre;-webkit-text-stroke:0.14px #1c1c1c;">-10</span></div>
<div style="position:absolute;left:88px;top:631.5px;width:7px;height:1px;background:#6e6e6e;"></div>
<div style="position:absolute;left:72px;top:631.7px;width:0;height:0;transform:rotate(-90deg);transform-origin:0 0;"><span id="t45" style="position:absolute;left:-2.35px;top:0.78px;font:9px/11px 'Liberation Sans', sans-serif;color:#1c1c1c;display:inline-block;transform-origin:0 0;transform:scaleX(0.9400);white-space:pre;-webkit-text-stroke:0.14px #1c1c1c;">0</span></div>
<div style="position:absolute;left:88px;top:591.5px;width:7px;height:1px;background:#6e6e6e;"></div>
<div style="position:absolute;left:72px;top:591.7px;width:0;height:0;transform:rotate(-90deg);transform-origin:0 0;"><span id="t46" style="position:absolute;left:-4.70px;top:0.78px;font:9px/11px 'Liberation Sans', sans-serif;color:#1c1c1c;display:inline-block;transform-origin:0 0;transform:scaleX(0.9400);white-space:pre;-webkit-text-stroke:0.14px #1c1c1c;">10</span></div>
<div style="position:absolute;left:88px;top:551.5px;width:7px;height:1px;background:#6e6e6e;"></div>
<div style="position:absolute;left:72px;top:551.7px;width:0;height:0;transform:rotate(-90deg);transform-origin:0 0;"><span id="t47" style="position:absolute;left:-4.70px;top:0.78px;font:9px/11px 'Liberation Sans', sans-serif;color:#1c1c1c;display:inline-block;transform-origin:0 0;transform:scaleX(0.9400);white-space:pre;-webkit-text-stroke:0.14px #1c1c1c;">20</span></div>
<div style="position:absolute;left:88px;top:511.5px;width:7px;height:1px;background:#6e6e6e;"></div>
<div style="position:absolute;left:72px;top:511.7px;width:0;height:0;transform:rotate(-90deg);transform-origin:0 0;"><span id="t48" style="position:absolute;left:-4.70px;top:0.78px;font:9px/11px 'Liberation Sans', sans-serif;color:#1c1c1c;display:inline-block;transform-origin:0 0;transform:scaleX(0.9400);white-space:pre;-webkit-text-stroke:0.14px #1c1c1c;">30</span></div>
<div style="position:absolute;left:88px;top:471.5px;width:7px;height:1px;background:#6e6e6e;"></div>
<div style="position:absolute;left:72px;top:471.7px;width:0;height:0;transform:rotate(-90deg);transform-origin:0 0;"><span id="t49" style="position:absolute;left:-4.70px;top:0.78px;font:9px/11px 'Liberation Sans', sans-serif;color:#1c1c1c;display:inline-block;transform-origin:0 0;transform:scaleX(0.9400);white-space:pre;-webkit-text-stroke:0.14px #1c1c1c;">40</span></div>
<div style="position:absolute;left:88px;top:431.5px;width:7px;height:1px;background:#6e6e6e;"></div>
<div style="position:absolute;left:72px;top:431.7px;width:0;height:0;transform:rotate(-90deg);transform-origin:0 0;"><span id="t50" style="position:absolute;left:-4.70px;top:0.78px;font:9px/11px 'Liberation Sans', sans-serif;color:#1c1c1c;display:inline-block;transform-origin:0 0;transform:scaleX(0.9400);white-space:pre;-webkit-text-stroke:0.14px #1c1c1c;">50</span></div>
<div style="position:absolute;left:88px;top:391.5px;width:7px;height:1px;background:#6e6e6e;"></div>
<div style="position:absolute;left:72px;top:391.7px;width:0;height:0;transform:rotate(-90deg);transform-origin:0 0;"><span id="t51" style="position:absolute;left:-4.70px;top:0.78px;font:9px/11px 'Liberation Sans', sans-serif;color:#1c1c1c;display:inline-block;transform-origin:0 0;transform:scaleX(0.9400);white-space:pre;-webkit-text-stroke:0.14px #1c1c1c;">60</span></div>
<div style="position:absolute;left:88px;top:351.5px;width:7px;height:1px;background:#6e6e6e;"></div>
<div style="position:absolute;left:72px;top:351.7px;width:0;height:0;transform:rotate(-90deg);transform-origin:0 0;"><span id="t52" style="position:absolute;left:-4.70px;top:0.78px;font:9px/11px 'Liberation Sans', sans-serif;color:#1c1c1c;display:inline-block;transform-origin:0 0;transform:scaleX(0.9400);white-space:pre;-webkit-text-stroke:0.14px #1c1c1c;">70</span></div>
<div style="position:absolute;left:88px;top:311.5px;width:7px;height:1px;background:#6e6e6e;"></div>
<div style="position:absolute;left:72px;top:311.7px;width:0;height:0;transform:rotate(-90deg);transform-origin:0 0;"><span id="t53" style="position:absolute;left:-4.70px;top:0.78px;font:9px/11px 'Liberation Sans', sans-serif;color:#1c1c1c;display:inline-block;transform-origin:0 0;transform:scaleX(0.9400);white-space:pre;-webkit-text-stroke:0.14px #1c1c1c;">80</span></div>
<div style="position:absolute;left:88px;top:271.5px;width:7px;height:1px;background:#6e6e6e;"></div>
<div style="position:absolute;left:72px;top:271.7px;width:0;height:0;transform:rotate(-90deg);transform-origin:0 0;"><span id="t54" style="position:absolute;left:-4.70px;top:0.78px;font:9px/11px 'Liberation Sans', sans-serif;color:#1c1c1c;display:inline-block;transform-origin:0 0;transform:scaleX(0.9400);white-space:pre;-webkit-text-stroke:0.14px #1c1c1c;">90</span></div>
<div style="position:absolute;left:88px;top:231.5px;width:7px;height:1px;background:#6e6e6e;"></div>
<div style="position:absolute;left:72px;top:231.7px;width:0;height:0;transform:rotate(-90deg);transform-origin:0 0;"><span id="t55" style="position:absolute;left:-7.06px;top:0.78px;font:9px/11px 'Liberation Sans', sans-serif;color:#1c1c1c;display:inline-block;transform-origin:0 0;transform:scaleX(0.9400);white-space:pre;-webkit-text-stroke:0.14px #1c1c1c;">100</span></div>
<div style="position:absolute;left:88px;top:191.5px;width:7px;height:1px;background:#6e6e6e;"></div>
<div style="position:absolute;left:72px;top:191.7px;width:0;height:0;transform:rotate(-90deg);transform-origin:0 0;"><span id="t56" style="position:absolute;left:-7.06px;top:0.78px;font:9px/11px 'Liberation Sans', sans-serif;color:#1c1c1c;display:inline-block;transform-origin:0 0;transform:scaleX(0.9400);white-space:pre;-webkit-text-stroke:0.14px #1c1c1c;">110</span></div>
<div style="position:absolute;left:72px;top:155px;width:23px;height:6px;overflow:hidden;"><div style="position:absolute;left:0;top:-3px;width:0;height:0;transform:rotate(-90deg);transform-origin:0 0;"><span id="t57" style="position:absolute;left:-7.06px;top:0.78px;font:9px/11px 'Liberation Sans', sans-serif;color:#1c1c1c;display:inline-block;transform-origin:0 0;transform:scaleX(0.9400);white-space:pre;-webkit-text-stroke:0.14px #1c1c1c;">120</span></div></div>
<svg style="position:absolute;left:379px;top:144px;" width="15" height="8" viewBox="0 0 15 8"><path d="M1.2 1 H13.2 L7.2 7 Z" fill="#000"/></svg>
<svg style="position:absolute;left:84px;top:398px;" width="8" height="15" viewBox="0 0 8 15"><path d="M1 1.2 V13.2 L7 7.2 Z" fill="#000"/></svg>
<!-- right -->
<div style="position:absolute;left:1154px;top:108px;width:2px;height:690px;background:#ebebeb;"></div>
<div style="position:absolute;left:1155px;top:108px;width:299px;height:22px;background:linear-gradient(#ededed,#e6e6e6 40%,#d4d4d4);"></div>
<div style="position:absolute;left:1155px;top:129px;width:299px;height:1.5px;background:#b8b8b8;"></div>
<span id="t58" style="position:absolute;left:1296.20px;top:112.05px;font:11.4px/14px 'Liberation Sans', sans-serif;color:#2a2a2a;display:inline-block;transform-origin:0 0;transform:scaleX(1.0305);white-space:pre;-webkit-text-stroke:0.18px #2a2a2a;">Réteglista</span>
<svg style="position:absolute;left:1156px;top:110px;" width="34" height="16" viewBox="0 0 34 16"><circle cx="8" cy="8" r="7" fill="#727272"/><path d="M5.2 5.2 L10.8 10.8 M10.8 5.2 L5.2 10.8" stroke="#f2f2f2" stroke-width="1.7" stroke-linecap="round"/><circle cx="26" cy="8" r="7" fill="#727272"/><path d="M24.6 6.6 V5 H29.6 V9 H28.2" fill="none" stroke="#f2f2f2" stroke-width="1.1"/><rect x="22.6" y="7" width="5" height="4" fill="none" stroke="#f2f2f2" stroke-width="1.1"/></svg>
<div style="position:absolute;left:1155px;top:130px;width:300px;height:26px;background:#b0b0b0;"></div>
<div style="position:absolute;left:1156px;top:131px;width:58px;height:24px;background:linear-gradient(#e6e6e6,#f2f2f2 50%,#f6f6f6);"></div>
<div style="position:absolute;left:1216px;top:131px;width:58px;height:24px;background:linear-gradient(#e6e6e6,#f2f2f2 50%,#f6f6f6);"></div>
<div style="position:absolute;left:1276px;top:131px;width:58px;height:24px;background:linear-gradient(#e6e6e6,#f2f2f2 50%,#f6f6f6);"></div>
<div style="position:absolute;left:1336px;top:131px;width:58px;height:24px;background:linear-gradient(#e6e6e6,#f2f2f2 50%,#f6f6f6);"></div>
<div style="position:absolute;left:1396px;top:131px;width:58px;height:24px;background:linear-gradient(#e6e6e6,#f2f2f2 50%,#f6f6f6);"></div>
<svg style="position:absolute;left:1156px;top:131px;" width="298" height="24" viewBox="0 0 298 24"><g transform="translate(29 12)"><path d="M-7.4 -0.3 C-5.6 -4.2 -2.4 -5.6 0.2 -5.6 C3.2 -5.6 6 -3.6 7.3 -0.2 C6.2 3.4 3.2 5.4 0 5.4 C-3 5.4 -6 3.6 -7.4 -0.3 Z" fill="#000"/><path d="M-5 -0.4 C-4 2.6 -2 3.9 0 3.9 C2.2 3.9 4.2 2.4 5 -0.6 C4.6 -1.8 3.6 -2.8 3 -3.1 C3.4 -0.2 1.8 1.6 0 1.6 C-1.8 1.6 -3.3 -0.2 -2.9 -3 C-3.8 -2.4 -4.6 -1.4 -5 -0.4 Z" fill="#fff"/><circle cx="-0.9" cy="-1.7" r="0.7" fill="#fff"/></g><g transform="translate(89 12)"><path d="M-7.4 -0.3 C-5.6 -4.2 -2.4 -5.6 0.2 -5.6 C3.2 -5.6 6 -3.6 7.3 -0.2 C6.2 3.4 3.2 5.4 0 5.4 C-3 5.4 -6 3.6 -7.4 -0.3 Z" fill="#a0a0a0"/><path d="M-5 -0.4 C-4 2.6 -2 3.9 0 3.9 C2.2 3.9 4.2 2.4 5 -0.6 C4.6 -1.8 3.6 -2.8 3 -3.1 C3.4 -0.2 1.8 1.6 0 1.6 C-1.8 1.6 -3.3 -0.2 -2.9 -3 C-3.8 -2.4 -4.6 -1.4 -5 -0.4 Z" fill="#ececec"/><circle cx="-0.9" cy="-1.7" r="0.7" fill="#ececec"/></g><path d="M149 5.5 V18.5 M142.5 12 H155.5" stroke="#800000" stroke-width="4"/><path d="M149 6.2 V17.8 M143.2 12 H154.8" stroke="#ff0000" stroke-width="2.6"/><path d="M202.5 12 H215.5" stroke="#800000" stroke-width="4"/><path d="M203.2 12 H214.8" stroke="#ff0000" stroke-width="2.6"/><g transform="translate(262.2 18.6) rotate(-43.2902)"><path d="M0 0 L3.6 -1.6 V1.6 Z" fill="#e8c88a" stroke="#8a5a1a" stroke-width="0.4"/><path d="M0 0 L1.2 -0.533333 V0.533333 Z" fill="#3a2a10"/><rect x="3.6" y="-1.6" width="12.3589" height="3.2" fill="#e8a020" stroke="#8a5a10" stroke-width="0.5"/><rect x="3.6" y="-1" width="12.3589" height="1" fill="#f6cf70"/><rect x="15.7589" y="-1.6" width="3.2" height="3.2" rx="0.8" fill="#e82020" stroke="#901010" stroke-width="0.4"/></g></svg>
<div style="position:absolute;left:1155px;top:156px;width:299px;height:642px;background:#fff;border-left:1px solid #b8b8b8;box-sizing:border-box;"></div>
<div style="position:absolute;left:1161px;top:163px;width:14.2px;height:7.2px;background:#fff;border:1px solid #000;"></div>
<span id="t59" style="position:absolute;left:1183.00px;top:158.69px;font:13.6px/17px 'Liberation Sans', sans-serif;color:#111;display:inline-block;transform-origin:0 0;transform:scaleX(0.9785);white-space:pre;-webkit-text-stroke:0.22px #111;">0</span>
<div style="position:absolute;left:1161px;top:183px;width:14.2px;height:7.2px;background:#ff0000;border:1px solid #000;"></div>
<span id="t60" style="position:absolute;left:1183.00px;top:178.69px;font:13.6px/17px 'Liberation Sans', sans-serif;color:#111;display:inline-block;transform-origin:0 0;transform:scaleX(0.9942);white-space:pre;-webkit-text-stroke:0.22px #111;">Központ</span>
<div style="position:absolute;left:1161px;top:203px;width:14.2px;height:7.2px;background:#000;border:1px solid #000;"></div>
<span id="t61" style="position:absolute;left:1183.00px;top:198.69px;font:13.6px/17px 'Liberation Sans', sans-serif;color:#111;display:inline-block;transform-origin:0 0;transform:scaleX(1.0009);white-space:pre;-webkit-text-stroke:0.22px #111;">Látható</span>
<div style="position:absolute;left:1161px;top:223px;width:14.2px;height:7.2px;background:#000;border:1px solid #000;"></div>
<span id="t62" style="position:absolute;left:1183.00px;top:218.69px;font:13.6px/17px 'Liberation Sans', sans-serif;color:#111;display:inline-block;transform-origin:0 0;transform:scaleX(0.9615);white-space:pre;-webkit-text-stroke:0.22px #111;">Vékony</span>
<svg style="position:absolute;left:1380px;top:155px;" width="74" height="90" viewBox="0 0 74 90"><g transform="translate(43 12)"><path d="M-7.4 -0.3 C-5.6 -4.2 -2.4 -5.6 0.2 -5.6 C3.2 -5.6 6 -3.6 7.3 -0.2 C6.2 3.4 3.2 5.4 0 5.4 C-3 5.4 -6 3.6 -7.4 -0.3 Z" fill="#000"/><path d="M-5 -0.4 C-4 2.6 -2 3.9 0 3.9 C2.2 3.9 4.2 2.4 5 -0.6 C4.6 -1.8 3.6 -2.8 3 -3.1 C3.4 -0.2 1.8 1.6 0 1.6 C-1.8 1.6 -3.3 -0.2 -2.9 -3 C-3.8 -2.4 -4.6 -1.4 -5 -0.4 Z" fill="#fff"/><circle cx="-0.9" cy="-1.7" r="0.7" fill="#fff"/></g><g transform="translate(65 12)"><rect x="-5" y="-1" width="10" height="7.8" fill="#b4b4b4"/><path d="M-3.4 -0.6 V-3 A3.4 3.6 0 0 1 3.4 -3 V-0.6" fill="none" stroke="#b4b4b4" stroke-width="1.4"/></g><g transform="translate(43 32)"><path d="M-7.4 -0.3 C-5.6 -4.2 -2.4 -5.6 0.2 -5.6 C3.2 -5.6 6 -3.6 7.3 -0.2 C6.2 3.4 3.2 5.4 0 5.4 C-3 5.4 -6 3.6 -7.4 -0.3 Z" fill="#000"/><path d="M-5 -0.4 C-4 2.6 -2 3.9 0 3.9 C2.2 3.9 4.2 2.4 5 -0.6 C4.6 -1.8 3.6 -2.8 3 -3.1 C3.4 -0.2 1.8 1.6 0 1.6 C-1.8 1.6 -3.3 -0.2 -2.9 -3 C-3.8 -2.4 -4.6 -1.4 -5 -0.4 Z" fill="#fff"/><circle cx="-0.9" cy="-1.7" r="0.7" fill="#fff"/></g><g transform="translate(65 32)"><rect x="-5" y="-1" width="10" height="7.8" fill="#b4b4b4"/><path d="M-3.4 -0.6 V-3 A3.4 3.6 0 0 1 3.4 -3 V-0.6" fill="none" stroke="#b4b4b4" stroke-width="1.4"/></g><g transform="translate(43 52)"><path d="M-7.4 -0.3 C-5.6 -4.2 -2.4 -5.6 0.2 -5.6 C3.2 -5.6 6 -3.6 7.3 -0.2 C6.2 3.4 3.2 5.4 0 5.4 C-3 5.4 -6 3.6 -7.4 -0.3 Z" fill="#000"/><path d="M-5 -0.4 C-4 2.6 -2 3.9 0 3.9 C2.2 3.9 4.2 2.4 5 -0.6 C4.6 -1.8 3.6 -2.8 3 -3.1 C3.4 -0.2 1.8 1.6 0 1.6 C-1.8 1.6 -3.3 -0.2 -2.9 -3 C-3.8 -2.4 -4.6 -1.4 -5 -0.4 Z" fill="#fff"/><circle cx="-0.9" cy="-1.7" r="0.7" fill="#fff"/></g><g transform="translate(65 52)"><rect x="-5" y="-1" width="10" height="7.8" fill="#b4b4b4"/><path d="M-3.4 -0.6 V-3 A3.4 3.6 0 0 1 3.4 -3 V-0.6" fill="none" stroke="#b4b4b4" stroke-width="1.4"/></g><g transform="translate(43 72)"><path d="M-7.4 -0.3 C-5.6 -4.2 -2.4 -5.6 0.2 -5.6 C3.2 -5.6 6 -3.6 7.3 -0.2 C6.2 3.4 3.2 5.4 0 5.4 C-3 5.4 -6 3.6 -7.4 -0.3 Z" fill="#000"/><path d="M-5 -0.4 C-4 2.6 -2 3.9 0 3.9 C2.2 3.9 4.2 2.4 5 -0.6 C4.6 -1.8 3.6 -2.8 3 -3.1 C3.4 -0.2 1.8 1.6 0 1.6 C-1.8 1.6 -3.3 -0.2 -2.9 -3 C-3.8 -2.4 -4.6 -1.4 -5 -0.4 Z" fill="#fff"/><circle cx="-0.9" cy="-1.7" r="0.7" fill="#fff"/></g><g transform="translate(65 72)"><rect x="-5" y="-1" width="10" height="7.8" fill="#b4b4b4"/><path d="M-3.4 -0.6 V-3 A3.4 3.6 0 0 1 3.4 -3 V-0.6" fill="none" stroke="#b4b4b4" stroke-width="1.4"/></g><g transform="translate(14.4 58.2) rotate(-42.7803)"><path d="M0 0 L3.6 -1.6 V1.6 Z" fill="#e8c88a" stroke="#8a5a1a" stroke-width="0.4"/><path d="M0 0 L1.2 -0.533333 V0.533333 Z" fill="#3a2a10"/><rect x="3.6" y="-1.6" width="11.6571" height="3.2" fill="#e8a020" stroke="#8a5a10" stroke-width="0.5"/><rect x="3.6" y="-1" width="11.6571" height="1" fill="#f6cf70"/><rect x="15.0571" y="-1.6" width="3.2" height="3.2" rx="0.8" fill="#e82020" stroke="#901010" stroke-width="0.4"/></g></svg>
<div style="position:absolute;left:1455px;top:108px;width:45px;height:690px;background:linear-gradient(to right,#e4e4e4,#d8d8d8 50%,#c4c4c4);"></div>
<div style="position:absolute;left:1453.5px;top:108px;width:1px;height:690px;background:#c2c2c2;"></div>
<div style="position:absolute;left:1463px;top:116px;width:2px;height:2px;background:#a4a4a4;"></div><div style="position:absolute;left:1469px;top:116px;width:2px;height:2px;background:#a4a4a4;"></div><div style="position:absolute;left:1475px;top:116px;width:2px;height:2px;background:#a4a4a4;"></div><div style="position:absolute;left:1481px;top:116px;width:2px;height:2px;background:#a4a4a4;"></div><div style="position:absolute;left:1487px;top:116px;width:2px;height:2px;background:#a4a4a4;"></div>
<div style="position:absolute;left:1456px;top:120px;width:43.4px;height:42.5px;background:#b4b4b4;border-radius:6px;"></div>
<div style="position:absolute;left:1456px;top:417px;width:43.4px;height:42.5px;background:#b4b4b4;border-radius:6px;"></div>
<div style="position:absolute;left:1458px;top:261px;width:42px;height:1px;background:repeating-linear-gradient(to right,#666 0 1px,transparent 1px 3px);"></div>
<div style="position:absolute;left:1458px;top:409px;width:42px;height:1px;background:repeating-linear-gradient(to right,#666 0 1px,transparent 1px 3px);"></div>
<svg style="position:absolute;left:1463px;top:127px;" width="28" height="28" viewBox="0 0 28 28"><rect x="0.5" y="0.5" width="27" height="27" fill="#fff" stroke="#2e2e2e" stroke-width="0.8"/><rect x="0.5" y="0.5" width="27" height="5" fill="#000"/><rect x="1.6" y="1.4" width="3.4" height="3.2" fill="#fff"/><path d="M8 11.5 L16 8.8 V20.2 L8 23 Z" fill="#9a9a9a" stroke="#555" stroke-width="0.6"/><path d="M10.5 12 L18.5 9.3 V20.7 L10.5 23.5 Z" fill="#e8e8e8" stroke="#666" stroke-width="0.6"/><path d="M13 12.5 L21 9.8 V21.2 L13 24 Z" fill="#fff" stroke="#888" stroke-width="0.6"/><path d="M14.6 21.4 L19.2 13 L19.6 19.6 Z" fill="none" stroke="#e03030" stroke-width="0.9"/></svg>
<svg style="position:absolute;left:1463px;top:174px;" width="28" height="28" viewBox="0 0 28 28"><rect x="0.5" y="0.5" width="27" height="27" fill="#fff" stroke="#2e2e2e" stroke-width="0.8"/><rect x="0.5" y="0.5" width="27" height="5" fill="#000"/><rect x="1.6" y="1.4" width="3.4" height="3.2" fill="#fff"/><rect x="7.4" y="11" width="10.4" height="8.2" fill="#f2ecc0" stroke="#8a8460" stroke-width="0.8"/><circle cx="16.2" cy="18.6" r="4.3" fill="#f2ecc0" stroke="#8a8460" stroke-width="0.8"/></svg>
<svg style="position:absolute;left:1463px;top:220px;" width="28" height="28" viewBox="0 0 28 28"><rect x="0.5" y="0.5" width="27" height="27" fill="#fff" stroke="#2e2e2e" stroke-width="0.8"/><rect x="0.5" y="0.5" width="27" height="5" fill="#000"/><rect x="1.6" y="1.4" width="3.4" height="3.2" fill="#fff"/><rect x="5.4" y="10.8" width="17.4" height="11.6" rx="2.2" fill="#f2f2f2" stroke="#c4d4ea" stroke-width="1.2"/></svg>
<svg style="position:absolute;left:1463px;top:276px;" width="28" height="28" viewBox="0 0 28 28"><rect x="0.5" y="0.5" width="27" height="27" fill="#fff" stroke="#2e2e2e" stroke-width="0.8"/><rect x="0.5" y="0.5" width="27" height="5" fill="#000"/><rect x="1.6" y="1.4" width="3.4" height="3.2" fill="#fff"/><rect x="4" y="8.8" width="4.4" height="3" fill="#000"/><rect x="10.8" y="8.8" width="13.2" height="3" fill="#fff" stroke="#222" stroke-width="0.7"/><rect x="4" y="14.8" width="4.4" height="3" fill="#000"/><rect x="10.8" y="14.8" width="13.2" height="3" fill="#fff" stroke="#222" stroke-width="0.7"/><rect x="4" y="20.8" width="4.4" height="3" fill="#000"/><rect x="10.8" y="20.8" width="13.2" height="3" fill="#fff" stroke="#222" stroke-width="0.7"/></svg>
<svg style="position:absolute;left:1463px;top:322px;" width="28" height="28" viewBox="0 0 28 28"><rect x="0.5" y="0.5" width="27" height="27" fill="#fff" stroke="#2e2e2e" stroke-width="0.8"/><rect x="0.5" y="0.5" width="27" height="5" fill="#000"/><rect x="1.6" y="1.4" width="3.4" height="3.2" fill="#fff"/><path d="M6.6 9.6 H21.6 C21.6 12 17 14.4 16.2 16 V22.6 L13.2 21.4 V16 C12 14.4 6.6 12 6.6 9.6 Z" fill="#8a8a8a" stroke="#555" stroke-width="0.6"/><ellipse cx="14.1" cy="9.8" rx="7.4" ry="1.3" fill="#c8c8c8" stroke="#666" stroke-width="0.5"/></svg>
<svg style="position:absolute;left:1463px;top:368px;" width="28" height="28" viewBox="0 0 28 28"><rect x="0.5" y="0.5" width="27" height="27" fill="#fff" stroke="#2e2e2e" stroke-width="0.8"/><rect x="0.5" y="0.5" width="27" height="5" fill="#000"/><rect x="1.6" y="1.4" width="3.4" height="3.2" fill="#fff"/><path d="M6.4 8.6 V23.4 L10.4 20.6 V11.4 Z" fill="#e8e8e8" stroke="#222" stroke-width="0.8"/><rect x="10.4" y="12" width="12" height="8" rx="1.2" fill="#727272"/><rect x="13" y="12" width="9.4" height="8" fill="#8e8e8e"/><path d="M4 16 H24" stroke="#f08080" stroke-width="0.8" stroke-dasharray="2.4 1"/></svg>
<svg style="position:absolute;left:1463px;top:424px;" width="28" height="28" viewBox="0 0 28 28"><rect x="0.5" y="0.5" width="27" height="27" fill="#fff" stroke="#2e2e2e" stroke-width="0.8"/><rect x="0.5" y="0.5" width="27" height="5" fill="#000"/><rect x="1.6" y="1.4" width="3.4" height="3.2" fill="#fff"/><path d="M4 9.2 H15" stroke="#555" stroke-width="0.9" stroke-dasharray="3 0.6 2 0.6"/><path d="M4 12.1 H17" stroke="#555" stroke-width="0.9" stroke-dasharray="3 0.6 2 0.6"/><path d="M4 15 H19" stroke="#555" stroke-width="0.9" stroke-dasharray="3 0.6 2 0.6"/><path d="M4 17.9 H16" stroke="#555" stroke-width="0.9" stroke-dasharray="3 0.6 2 0.6"/><path d="M0.5 21.6 H27.5" stroke="#111" stroke-width="0.8"/><path d="M9.6 24.6 H24.4" stroke="#333" stroke-width="1.4" stroke-dasharray="2 0.4"/><path d="M4 23.4 a1.2 1.3 0 1 0 0.01 2.6" fill="none" stroke="#333" stroke-width="0.6"/></svg>
<svg style="position:absolute;left:1463px;top:471px;" width="28" height="28" viewBox="0 0 28 28"><rect x="0.5" y="0.5" width="27" height="27" fill="#fff" stroke="#2e2e2e" stroke-width="0.8"/><rect x="0.5" y="0.5" width="27" height="5" fill="#000"/><rect x="1.6" y="1.4" width="3.4" height="3.2" fill="#fff"/><rect x="7.6" y="9.6" width="12.8" height="15" rx="1" fill="#c8913c" stroke="#8a5a18" stroke-width="0.7"/><rect x="9.2" y="11.4" width="9.6" height="12" fill="#f6f6f6"/><rect x="11.2" y="8.4" width="5.6" height="3" rx="0.8" fill="#9a9a94" stroke="#666" stroke-width="0.5"/><path d="M10.6 14.4 H17.4 M10.6 16.4 H17.4 M10.6 18.4 H16 M10.6 20.4 H15" stroke="#b8b8b8" stroke-width="0.7"/><path d="M16.4 23.4 V20.8 H18.8 Z" fill="#aaa"/></svg>
<!-- bottom -->
<div style="position:absolute;left:72px;top:748px;width:1082px;height:23px;background:#fff;border-top:1.5px solid #c2c2c2;border-bottom:1px solid #c8c8c8;box-sizing:border-box;"></div>
<span id="t63" style="position:absolute;left:77.00px;top:749.80px;font:13px/16px 'Liberation Sans', sans-serif;color:#0a0ad0;display:inline-block;transform-origin:0 0;transform:scaleX(1.0056);white-space:pre;-webkit-text-stroke:0.21px #0a0ad0;font-style:italic;">Parancs:</span>
<span id="t64" style="position:absolute;left:132.60px;top:749.80px;font:13px/16px 'Liberation Sans', sans-serif;color:#0a0ae0;display:inline-block;transform-origin:0 0;transform:scaleX(0.9891);white-space:pre;-webkit-text-stroke:0.21px #0a0ae0;">new</span>
<div style="position:absolute;left:1141.5px;top:750px;width:8.5px;height:17.5px;background:#7c7c7c;border-radius:4px;"></div>
<div style="position:absolute;left:72px;top:771px;width:1082px;height:27px;background:#ececec;"></div>
<span id="t65" style="position:absolute;left:73.00px;top:777.20px;font:13px/16px 'Liberation Sans', sans-serif;color:#111;display:inline-block;transform-origin:0 0;transform:scaleX(0.9900);white-space:pre;-webkit-text-stroke:0.21px #111;">Parancs:</span>
<div style="position:absolute;left:128px;top:776px;width:998px;height:18px;background:#fff;"></div>
<div style="position:absolute;left:1127.5px;top:772.5px;width:25px;height:24.5px;background:#f4f4f4;border:1px solid #bcbcbc;box-sizing:border-box;"></div>
<svg style="position:absolute;left:1132px;top:778px;" width="16" height="13" viewBox="0 0 16 13"><rect x="1" y="1" width="14" height="11" fill="#fff" stroke="#111" stroke-width="1"/><rect x="1" y="1" width="14" height="3.4" fill="#111"/></svg>
<div style="position:absolute;left:0px;top:798px;width:1500px;height:46px;background:#dcdcdc;"></div>
<span id="t66" style="position:absolute;left:2.20px;top:806.30px;font:9.8px/12px 'Liberation Sans', sans-serif;color:#1a1a1a;display:inline-block;transform-origin:0 0;transform:scaleX(1.0277);white-space:pre;-webkit-text-stroke:0.16px #1a1a1a;">47.75,56.75</span>
<span id="t67" style="position:absolute;left:2.20px;top:826.50px;font:9.8px/12px 'Liberation Sans', sans-serif;color:#1a1a1a;display:inline-block;transform-origin:0 0;transform:scaleX(1.0016);white-space:pre;-webkit-text-stroke:0.16px #1a1a1a;">@47.75,56.75</span>
<div style="position:absolute;left:253px;top:802px;width:1px;height:42px;background:#6a6a6a;"></div>
<div style="position:absolute;left:254px;top:802px;width:1px;height:42px;background:#f0f0f0;"></div>
<span id="t68" style="position:absolute;left:256.20px;top:806.30px;font:9.8px/12px 'Liberation Sans', sans-serif;color:#1a1a1a;display:inline-block;transform-origin:0 0;transform:scaleX(1.0294);white-space:pre;-webkit-text-stroke:0.16px #1a1a1a;">74.1662&lt;50°</span>
<span id="t69" style="position:absolute;left:256.20px;top:826.50px;font:9.8px/12px 'Liberation Sans', sans-serif;color:#1a1a1a;display:inline-block;transform-origin:0 0;transform:scaleX(1.0045);white-space:pre;-webkit-text-stroke:0.16px #1a1a1a;">@74.1662&lt;50°</span>
<div style="position:absolute;left:506px;top:818.5px;width:6px;height:6px;background:#c6c6c6;border-radius:50%;"></div>
<div style="position:absolute;left:940.5px;top:818.5px;width:6px;height:6px;background:#c6c6c6;border-radius:50%;"></div>
<div style="position:absolute;left:1269.5px;top:818.5px;width:6px;height:6px;background:#c6c6c6;border-radius:50%;"></div>
<span id="t70" style="position:absolute;left:557.30px;top:816.60px;font:9.8px/12px 'Liberation Sans', sans-serif;color:#1a1a1a;display:inline-block;transform-origin:0 0;transform:scaleX(1.0345);white-space:pre;-webkit-text-stroke:0.16px #1a1a1a;">Egység vagy régió kiválasztása</span>
<span id="t71" style="position:absolute;left:949.00px;top:816.60px;font:9.8px/12px 'Liberation Sans', sans-serif;color:#1a1a1a;display:inline-block;transform-origin:0 0;transform:scaleX(1.0646);white-space:pre;-webkit-text-stroke:0.16px #1a1a1a;">Nincs kiválasztott szervezet.</span>
<svg style="position:absolute;left:716px;top:804px;" width="21" height="33" viewBox="0 0 21 33"><path d="M2.2 13 C2.2 5 5.4 1.4 10.2 1.4 C15 1.4 18.4 5 18.4 13 V21 C18.4 27.6 15 31.4 10.2 31.4 C5.4 31.4 2.2 27.6 2.2 21 Z" fill="#fff" stroke="#222" stroke-width="1"/><path d="M2.4 14.6 H18.2" stroke="#222" stroke-width="0.9"/><rect x="8.4" y="3.6" width="3.6" height="7.6" rx="1.8" fill="#fff" stroke="#222" stroke-width="0.9"/><path d="M10.2 11 V14.6" stroke="#222" stroke-width="0.9"/></svg>
<!-- overlay -->
<svg style="position:absolute;left:94px;top:110px;" width="18" height="18" viewBox="0 0 18 18"><circle cx="8.2" cy="8.8" r="5.6" fill="#f4f4f4" stroke="#3a489a" stroke-width="2"/><circle cx="8.2" cy="8.8" r="4.5" fill="none" stroke="#a8b0d4" stroke-width="0.7"/><path d="M8.2 4 V13.6 M3.4 8.8 H13" stroke="#d8a0a0" stroke-width="0.8"/><path d="M8.6 9.2 L13.8 14.2" stroke="#e8a020" stroke-width="2.2"/><path d="M13.2 13.6 L14.6 15" stroke="#e02020" stroke-width="2"/></svg>
<svg style="position:absolute;left:-11.1px;top:368.8px;" width="77" height="77" viewBox="0 0 77 77"><defs><radialGradient id="ringg"><stop offset="0" stop-color="rgba(255,255,255,0.04)"/><stop offset="0.6" stop-color="rgba(255,255,255,0.08)"/><stop offset="0.78" stop-color="rgba(235,242,250,0.22)"/><stop offset="0.83" stop-color="rgba(150,176,204,0.32)"/><stop offset="0.86" stop-color="rgba(128,158,190,0.66)"/><stop offset="0.89" stop-color="rgba(150,176,204,0.50)"/><stop offset="0.92" stop-color="rgba(128,158,190,0.68)"/><stop offset="0.95" stop-color="rgba(150,176,204,0.52)"/><stop offset="0.98" stop-color="rgba(132,162,194,0.62)"/><stop offset="1" stop-color="rgba(150,176,204,0)"/></radialGradient></defs><circle cx="38.5" cy="38.5" r="38.3" fill="url(#ringg)"/></svg>
<div style="position:absolute;left:13px;top:435px;width:128.5px;height:24px;border-radius:3px;background:linear-gradient(#f3f6fa,#e2e7ef);box-shadow:0 2px 3px rgba(0,0,0,0.55),0 0 0 0.6px rgba(120,130,150,0.55);"></div>
<span id="t72" style="position:absolute;left:18.40px;top:438.28px;font:14.2px/18px 'Liberation Sans', sans-serif;color:#111;display:inline-block;transform-origin:0 0;transform:scaleX(0.9814);white-space:pre;-webkit-text-stroke:0.23px #111;">Módosító eszközök</span>
<svg style="position:absolute;left:24.9px;top:406.4px;" width="19" height="29" viewBox="0 0 19 29"><path d="M1.4 1.6 V22 L6.2 17.4 L9.8 26 L13.4 24.4 L9.9 16.2 H16.2 Z" fill="#fff" stroke="#000" stroke-width="1.5" stroke-linejoin="miter"/></svg>
</div></body></html>
